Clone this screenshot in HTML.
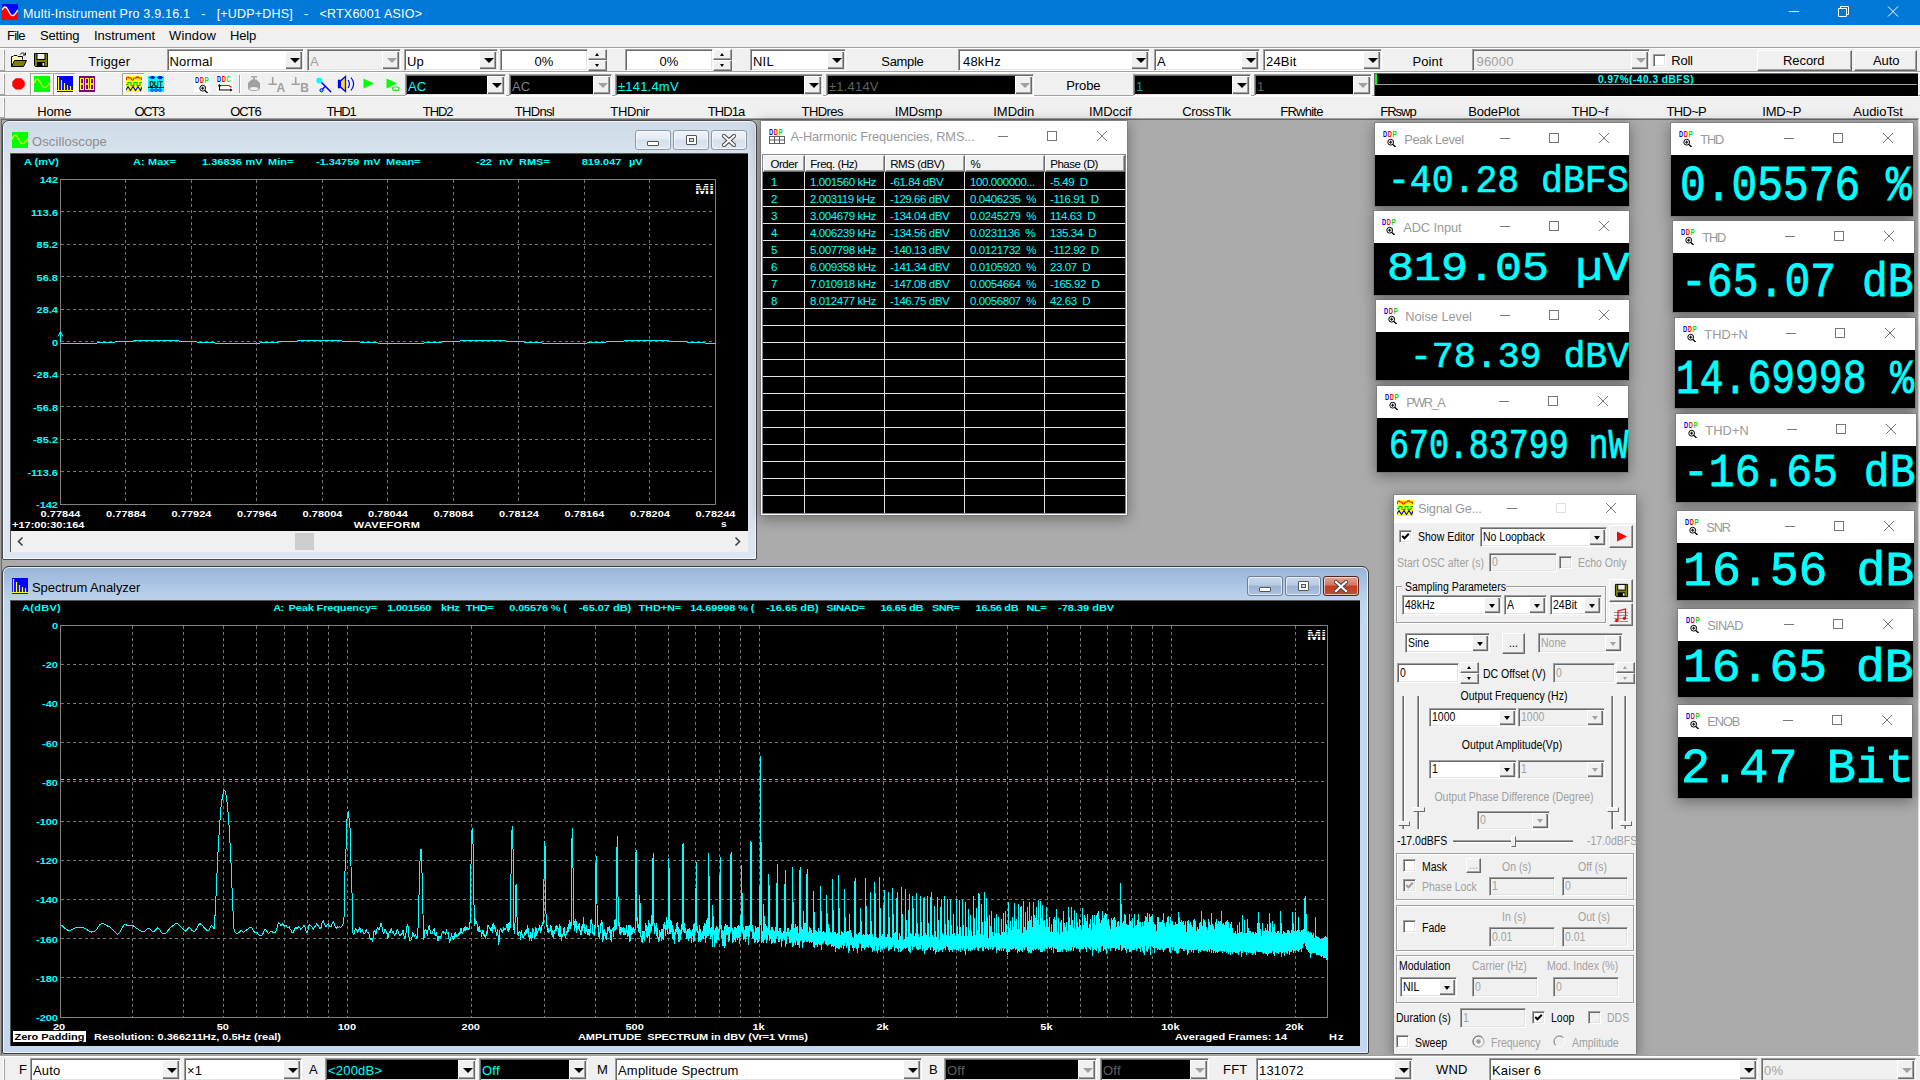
<!DOCTYPE html>
<html><head><meta charset="utf-8"><title>Multi-Instrument Pro</title><style>
html,body{margin:0;padding:0;}
body{width:1920px;height:1080px;overflow:hidden;background:#ababab;position:relative;font-family:"Liberation Sans",sans-serif;font-size:13px;color:#000;}
div{position:absolute;box-sizing:content-box;}
.t{white-space:pre;line-height:1;}
.ui{font-family:"Liberation Sans",sans-serif;font-size:13px;letter-spacing:0.2px;}
.ms{font-family:"Liberation Sans",sans-serif;font-size:11px;letter-spacing:-0.32px;}
.mss{font-size:12px;letter-spacing:0;transform:scaleX(0.875);transform-origin:0 0;margin-top:-0.45px;}
.sunk>div.mss{margin-top:0.45px;}
.dis{color:#a0a0a0;}
.ab{font-family:"Liberation Sans",sans-serif;font-weight:bold;font-size:11px;transform:scaleY(0.885);transform-origin:0 9.3px;}
.cy{color:#00ffff;}
.wh{color:#fff;}
.sunk{border:1px solid;border-color:#a0a0a0 #fff #fff #a0a0a0;box-shadow:inset 1px 1px 0 #696969, inset -1px -1px 0 #e3e3e3;padding:1px;overflow:hidden;}
.sunk>div,.sunk>svg{margin:1px;}
.cbtn{background:#f0f0f0;border:0;box-shadow:inset 1px 1px 0 #fff, inset -1px -1px 0 #696969, inset -2px -2px 0 #a0a0a0, inset 2px 2px 0 #f0f0f0;}
.rbtn{background:#f0f0f0;border:1px solid;border-color:#fff #696969 #696969 #fff;box-shadow:inset -1px -1px 0 #a0a0a0;}
.arr{width:0;height:0;}
.grp{border:1px solid #a0a0a0;box-shadow:1px 1px 0 #fff, inset 1px 1px 0 #fff;}
.mono{font-family:"Liberation Mono",monospace;font-weight:normal;color:#00ffff;white-space:pre;line-height:1;transform-origin:0 0;}
.w10{background:#fff;box-shadow:0 0 0 1px rgba(110,110,110,0.5), 0 3px 13px 1px rgba(0,0,0,0.36);}
.w10t{font-family:"Liberation Sans",sans-serif;font-size:13px;color:#999;white-space:pre;line-height:1;}
</style></head><body>
<div class="" style="left:0px;top:0px;width:1920px;height:25px;background:#0078d7"></div>
<svg style="position:absolute;left:2px;top:4px" width="16" height="16" viewBox="0 0 16 16"><rect width="16" height="16" fill="#0000ff"/><path d="M0 16 V6 C2 2 4 2 6 6 S10 14 13 10 L16 6 V16 Z" fill="#ff0000"/><path d="M0 6 C2 2 4 2 6 6 S10 14 13 10 L16 6" fill="none" stroke="#fff" stroke-width="1.3"/></svg>
<div class="t " style="left:23px;top:7.5px;font-size:12.5px;letter-spacing:0.207px;color:#fff">Multi-Instrument Pro 3.9.16.1   -   [+UDP+DHS]   -   &lt;RTX6001 ASIO&gt;</div>
<svg style="position:absolute;left:1780px;top:0" width="140" height="25" viewBox="0 0 140 25"><g stroke="#fff" stroke-width="1" fill="none"><path d="M9 11.5 H19"/><path d="M58.5 8.5 h8 v8 h-8 z M60.5 8.5 v-2 h8 v8 h-2"/><path d="M108 6.5 l10 10 M118 6.5 l-10 10"/></g></svg>
<div class="" style="left:0px;top:25px;width:1920px;height:22px;background:#f0f0f0"></div>
<div class="t " style="left:7px;top:29px;font-size:13px;letter-spacing:-0.815px;">File</div>
<div class="t " style="left:40px;top:29px;font-size:13px;letter-spacing:-0.162px;">Setting</div>
<div class="t " style="left:94px;top:29px;font-size:13px;letter-spacing:-0.046px;">Instrument</div>
<div class="t " style="left:169px;top:29px;font-size:13px;letter-spacing:0.153px;">Window</div>
<div class="t " style="left:230px;top:29px;font-size:13px;letter-spacing:-0.178px;">Help</div>
<div class="" style="left:0px;top:47px;width:1920px;height:72px;background:#f0f0f0"></div>
<div class="" style="left:0px;top:47px;width:1920px;height:1px;background:#a0a0a0"></div>
<div class="" style="left:0px;top:48px;width:1920px;height:1px;background:#fff"></div>
<div class="" style="left:0px;top:71px;width:1920px;height:1px;background:#a0a0a0"></div>
<div class="" style="left:0px;top:72px;width:1920px;height:1px;background:#fff"></div>
<div class="" style="left:0px;top:95px;width:1920px;height:1px;background:#a0a0a0"></div>
<div class="" style="left:0px;top:96px;width:1920px;height:1px;background:#fff"></div>
<div class="" style="left:3px;top:50px;width:1px;height:20px;background:#fff"></div>
<div class="" style="left:4px;top:50px;width:1px;height:20px;background:#a0a0a0"></div>
<div class="" style="left:0px;top:70px;width:5px;height:1px;background:#a0a0a0"></div>
<div class="" style="left:3px;top:74px;width:1px;height:20px;background:#fff"></div>
<div class="" style="left:4px;top:74px;width:1px;height:20px;background:#a0a0a0"></div>
<div class="" style="left:0px;top:94px;width:5px;height:1px;background:#a0a0a0"></div>
<div class="" style="left:3px;top:98px;width:1px;height:19px;background:#fff"></div>
<div class="" style="left:4px;top:98px;width:1px;height:19px;background:#a0a0a0"></div>
<div class="" style="left:0px;top:117px;width:5px;height:1px;background:#a0a0a0"></div>
<svg style="position:absolute;left:11px;top:52px" width="17" height="16" viewBox="0 0 17 16"><path d="M0.5 14.5 V4.5 H2 L3 3.5 H6 L7 4.5 H11.5 V7.5" fill="#ffff9c" stroke="#000" stroke-width="1"/><path d="M0.5 14.5 L3.5 8.5 H15.5 L12.5 14.5 Z" fill="#808000" stroke="#000" stroke-width="1"/><path d="M9 2.5 C10.5 0.5 13 0.5 14 2.5 M14.5 0.5 V3 H12" fill="none" stroke="#000" stroke-width="1"/></svg>
<svg style="position:absolute;left:33px;top:52px" width="16" height="16" viewBox="0 0 16 16"><path d="M1.5 1.5 H14.5 V14.5 H2.5 L1.5 13.5 Z" fill="#808000" stroke="#000" stroke-width="1"/><rect x="4" y="1.5" width="8" height="6" fill="#f0f0f0" stroke="#000" stroke-width="1"/><rect x="4" y="10" width="8" height="4.5" fill="#000"/><rect x="9.5" y="11" width="1.8" height="2.6" fill="#f0f0f0"/></svg>
<div class="t " style="left:88.3px;top:55px;font-size:13px;letter-spacing:0.168px;">Trigger</div>
<div class="sunk" style="left:167px;top:49px;width:133px;height:18px;background:#fff;color:#000;"><div class="t ui" style="left:0.5px;top:4px;">Normal</div><div class="cbtn" style="left:116px;top:0px;width:17px;height:18px"></div><div class="arr" style="left:120.5px;top:7.0px;border-left:5.0px solid transparent;border-right:5.0px solid transparent;border-top:5px solid #000"></div></div>
<div class="sunk" style="left:307px;top:49px;width:90px;height:18px;background:#f0f0f0;color:#a0a0a0;"><div class="t ui" style="left:1px;top:4px;">A</div><div class="cbtn" style="left:73px;top:0px;width:17px;height:18px"></div><div class="arr" style="left:77.5px;top:7.0px;border-left:5.0px solid transparent;border-right:5.0px solid transparent;border-top:5px solid #a0a0a0"></div></div>
<div class="sunk" style="left:404px;top:49px;width:90px;height:18px;background:#fff;color:#000;"><div class="t ui" style="left:1px;top:4px;">Up</div><div class="cbtn" style="left:73px;top:0px;width:17px;height:18px"></div><div class="arr" style="left:77.5px;top:7.0px;border-left:5.0px solid transparent;border-right:5.0px solid transparent;border-top:5px solid #000"></div></div>
<div class="sunk" style="left:500px;top:49px;width:84px;height:18px;background:#fff;color:#000"><div class="t ui" style="left:0;width:84px;text-align:center;top:4px;">0%</div></div>
<div class="rbtn" style="left:588px;top:49px;width:17px;height:9px"><div class="arr" style="left:6.0px;top:3.0px;border-left:2.5px solid transparent;border-right:2.5px solid transparent;border-bottom:3px solid #000"></div></div><div class="rbtn" style="left:588px;top:60px;width:17px;height:9px"><div class="arr" style="left:6.0px;top:3.0px;border-left:2.5px solid transparent;border-right:2.5px solid transparent;border-top:3px solid #000"></div></div>
<div class="sunk" style="left:625px;top:49px;width:84px;height:18px;background:#fff;color:#000"><div class="t ui" style="left:0;width:84px;text-align:center;top:4px;">0%</div></div>
<div class="rbtn" style="left:713px;top:49px;width:17px;height:9px"><div class="arr" style="left:6.0px;top:3.0px;border-left:2.5px solid transparent;border-right:2.5px solid transparent;border-bottom:3px solid #000"></div></div><div class="rbtn" style="left:713px;top:60px;width:17px;height:9px"><div class="arr" style="left:6.0px;top:3.0px;border-left:2.5px solid transparent;border-right:2.5px solid transparent;border-top:3px solid #000"></div></div>
<div class="sunk" style="left:750px;top:49px;width:92px;height:18px;background:#fff;color:#000;"><div class="t ui" style="left:1px;top:4px;">NIL</div><div class="cbtn" style="left:75px;top:0px;width:17px;height:18px"></div><div class="arr" style="left:79.5px;top:7.0px;border-left:5.0px solid transparent;border-right:5.0px solid transparent;border-top:5px solid #000"></div></div>
<div class="t " style="left:881.3px;top:55px;font-size:13px;letter-spacing:-0.335px;">Sample</div>
<div class="sunk" style="left:958px;top:49px;width:188px;height:18px;background:#fff;color:#000;"><div class="t ui" style="left:3px;top:4px;">48kHz</div><div class="cbtn" style="left:171px;top:0px;width:17px;height:18px"></div><div class="arr" style="left:175.5px;top:7.0px;border-left:5.0px solid transparent;border-right:5.0px solid transparent;border-top:5px solid #000"></div></div>
<div class="sunk" style="left:1154px;top:49px;width:102px;height:18px;background:#fff;color:#000;"><div class="t ui" style="left:1px;top:4px;">A</div><div class="cbtn" style="left:85px;top:0px;width:17px;height:18px"></div><div class="arr" style="left:89.5px;top:7.0px;border-left:5.0px solid transparent;border-right:5.0px solid transparent;border-top:5px solid #000"></div></div>
<div class="sunk" style="left:1263px;top:49px;width:115px;height:18px;background:#fff;color:#000;"><div class="t ui" style="left:1px;top:4px;">24Bit</div><div class="cbtn" style="left:98px;top:0px;width:17px;height:18px"></div><div class="arr" style="left:102.5px;top:7.0px;border-left:5.0px solid transparent;border-right:5.0px solid transparent;border-top:5px solid #000"></div></div>
<div class="t " style="left:1412.5px;top:55px;font-size:13px;letter-spacing:0.093px;">Point</div>
<div class="sunk" style="left:1472px;top:49px;width:174px;height:18px;background:#f0f0f0;color:#a0a0a0;"><div class="t ui" style="left:2.5px;top:4px;">96000</div><div class="cbtn" style="left:157px;top:0px;width:17px;height:18px"></div><div class="arr" style="left:161.5px;top:7.0px;border-left:5.0px solid transparent;border-right:5.0px solid transparent;border-top:5px solid #a0a0a0"></div></div>
<div class="sunk" style="left:1653px;top:54px;width:9px;height:9px;background:#fff"></div>
<div class="t " style="left:1671.3px;top:54px;font-size:13px;letter-spacing:-0.231px;">Roll</div>
<div class="rbtn" style="left:1757px;top:50px;width:93px;height:19px;"><div class="t " style="left:25px;top:3px;font-size:13px;letter-spacing:-0.081px;">Record</div></div>
<div class="rbtn" style="left:1854px;top:50px;width:61px;height:19px;"><div class="t " style="left:18px;top:3px;font-size:13px;letter-spacing:-0.081px;">Auto</div></div>
<svg style="position:absolute;left:11.5px;top:77.5px" width="13" height="12" viewBox="0 0 13 12"><path d="M3.7 0.3 H9.3 L12.7 3.6 V8.2 L9.3 11.5 H3.7 L0.3 8.2 V3.6 Z" fill="#ff0000"/></svg>
<div class="" style="left:30px;top:73px;width:22px;height:22px;background:#f6f6f6;box-shadow:inset 1px 1px 0 #a0a0a0, inset -1px -1px 0 #fff"></div>
<div class="" style="left:53px;top:73px;width:22px;height:22px;background:#f6f6f6;box-shadow:inset 1px 1px 0 #a0a0a0, inset -1px -1px 0 #fff"></div>
<div class="" style="left:122px;top:73px;width:22px;height:22px;background:#f6f6f6;box-shadow:inset 1px 1px 0 #a0a0a0, inset -1px -1px 0 #fff"></div>
<svg style="position:absolute;left:34px;top:76px" width="16" height="16" viewBox="0 0 16 16"><rect width="16" height="16" fill="#00ff00"/><path d="M0 7 C2 2 4 2 6 6 S10 14 13 10 L16 7" fill="none" stroke="#ffff00" stroke-width="1.1"/></svg>
<svg style="position:absolute;left:57px;top:76px" width="16" height="16" viewBox="0 0 16 16"><rect width="16" height="16" fill="#0000ff"/><path d="M1.5 1 V14 M4.5 4 V14 M7.5 7 V14 M10.5 9 V14 M13.5 10 V14" stroke="#ffff00" stroke-width="1.2"/><path d="M0 14.5 H16" stroke="#ffff00" stroke-width="1"/></svg>
<svg style="position:absolute;left:79px;top:76px" width="16" height="16" viewBox="0 0 16 16"><rect width="16" height="16" fill="#800080"/><g fill="none" stroke="#ffff00" stroke-width="1"><rect x="1.5" y="2.5" width="3" height="5.5"/><rect x="1.5" y="8" width="3" height="5.5"/><rect x="6.5" y="2.5" width="3" height="5.5"/><rect x="6.5" y="8" width="3" height="5.5"/><rect x="11.5" y="2.5" width="3" height="5.5"/><rect x="11.5" y="8" width="3" height="5.5"/></g><rect x="10" y="12.5" width="1" height="1.5" fill="#ffff00"/></svg>
<svg style="position:absolute;left:126px;top:76px" width="16" height="16" viewBox="0 0 16 16"><rect width="16" height="16" fill="#ffff00"/><path d="M0 4 C1 0.5 2 0.5 3 2 H5 C6 5 7 5 8 2 H10 C11 0.5 12 0.5 13 2 H15 L16 4" fill="none" stroke="#ff0000" stroke-width="1.1"/><path d="M0 8.5 H2 V6.5 H5 V9.5 H8 V6.5 H11 V9.5 H14 V6.5 H16" fill="none" stroke="#00c000" stroke-width="1.1"/><path d="M0 14 L2 10.5 L4.5 14.5 L7 10.5 L9.5 14.5 L12 10.5 L14.5 14.5 L16 11" fill="none" stroke="#0000ff" stroke-width="1.1"/></svg>
<svg style="position:absolute;left:148px;top:76px" width="16" height="16" viewBox="0 0 16 16"><rect width="16" height="16" fill="#00ffff"/><path d="M1 1.5 H7 M3 0.5 h3 v2 h-3z M9 1.5 h2 M12 1.5 h3 M11.5 0 l-2 1.5 l2 1.5z M12.5 0 l2 1.5 l-2 1.5z" stroke="#0000ff" stroke-width="0.9" fill="#0000ff"/><text x="8" y="10.5" font-family="Liberation Sans" font-weight="bold" font-size="8.5" text-anchor="middle" fill="#000" textLength="13" lengthAdjust="spacingAndGlyphs">DUT</text><path d="M0 11.5 H16" stroke="#0000ff" stroke-width="1"/><g fill="none" stroke="#0000ff" stroke-width="0.9"><circle cx="4" cy="14" r="1.3"/><circle cx="8" cy="14" r="1.3"/><circle cx="12" cy="14" r="1.3"/></g></svg>
<div class="" style="left:194px;top:76px;width:16px;height:16px;background:#fff"></div>
<svg style="position:absolute;left:195px;top:77px" width="16.0" height="16.0" viewBox="0 0 16 16"><g font-family="Liberation Sans" font-weight="bold" font-size="8.2"><text x="0" y="6" fill="#0000ff" textLength="4.2" lengthAdjust="spacingAndGlyphs">D</text><text x="4.8" y="6" fill="#ff0000" textLength="4.2" lengthAdjust="spacingAndGlyphs">D</text><text x="9.6" y="6" fill="#00e000" textLength="4.2" lengthAdjust="spacingAndGlyphs">P</text></g><circle cx="7.7" cy="11.2" r="2.9" fill="none" stroke="#000" stroke-width="1"/><path d="M9.8 13.4 L12.6 16" stroke="#000" stroke-width="1.3"/><path d="M7.7 9.6 V12.8 M6.1 11.2 H9.3" stroke="#000" stroke-width="1"/></svg>
<svg style="position:absolute;left:217px;top:76px" width="16" height="16" viewBox="0 0 16 16"><rect width="16" height="16" fill="#fff"/><g font-family="Liberation Sans" font-weight="bold" font-size="8.2"><text x="0" y="6" fill="#0000ff" textLength="4.2" lengthAdjust="spacingAndGlyphs">D</text><text x="4.8" y="6" fill="#ff0000" textLength="4.2" lengthAdjust="spacingAndGlyphs">D</text><text x="9.6" y="6" fill="#00e000" textLength="4.2" lengthAdjust="spacingAndGlyphs">C</text></g><path d="M2.5 9.5 V14 H14" fill="none" stroke="#000" stroke-width="1.1"/><path d="M2.5 9.5 H12 L14.5 11.5" fill="none" stroke="#ff0000" stroke-width="1.1"/><path d="M2.5 8 l-1.7 2.2 h3.4z M15.5 14 l-2.2 -1.7 v3.4z" fill="#000"/></svg>
<div class="" style="left:239px;top:75px;width:1px;height:18px;background:#a0a0a0"></div>
<div class="" style="left:240px;top:75px;width:1px;height:18px;background:#fff"></div>
<svg style="position:absolute;left:247px;top:76px" width="14" height="16" viewBox="0 0 14 16"><path d="M4 0.8 H10" stroke="#a0a0a0" stroke-width="1.3"/><path d="M7 0.8 V4" stroke="#a0a0a0" stroke-width="1.6"/><path d="M4.5 3.5 H9.5 L13 7 V12 C13 16 1 16 1 12 V7 Z" fill="#a0a0a0"/><ellipse cx="7" cy="12.6" rx="4.3" ry="1.5" fill="#f0f0f0"/></svg>
<svg style="position:absolute;left:268px;top:76px" width="18" height="16" viewBox="0 0 18 16"><path d="M4.7 1 V8.2 M0.5 8.2 H8.9" stroke="#a0a0a0" stroke-width="1.6" fill="none"/><text x="8.6" y="15.6" font-family="Liberation Sans" font-weight="bold" font-size="12" fill="#a0a0a0">A</text></svg>
<svg style="position:absolute;left:291px;top:76px" width="18" height="16" viewBox="0 0 18 16"><path d="M4.7 1 V8.2 M0.5 8.2 H8.9" stroke="#a0a0a0" stroke-width="1.6" fill="none"/><text x="9.2" y="15.6" font-family="Liberation Sans" font-weight="bold" font-size="12" fill="#a0a0a0">B</text></svg>
<svg style="position:absolute;left:315px;top:76px" width="17" height="17" viewBox="0 0 17 17"><path d="M5.5 5.5 L15.5 15.5" stroke="#0000ff" stroke-width="1.6"/><path d="M10.5 10 L7 14" stroke="#0000ff" stroke-width="1.3"/><circle cx="6.5" cy="14.3" r="1.6" fill="#00ffff" stroke="#0000ff" stroke-width="1"/><circle cx="4.3" cy="4.5" r="3" fill="#00ffff"/><rect x="15" y="15" width="1.3" height="1.3" fill="#000"/></svg>
<svg style="position:absolute;left:337px;top:75px" width="19" height="18" viewBox="0 0 19 18"><path d="M1.5 5.5 H4 L8.5 1.5 V16.5 L4 12.5 H1.5 Z" fill="#ffe000" stroke="#0000ff" stroke-width="1.3"/><path d="M1.5 5.5 H4 V12.5 H1.5Z" fill="#0000ff"/><path d="M11 5 C12.8 7.5 12.8 10.5 11 13 M14 2.5 C17.2 6.5 17.2 11.5 14 15.5" fill="none" stroke="#0000ff" stroke-width="1.2"/></svg>
<svg style="position:absolute;left:363px;top:78px" width="12" height="11" viewBox="0 0 12 11"><path d="M0.5 0.5 L11 5.5 L0.5 10.5 Z" fill="#00ff00"/></svg>
<svg style="position:absolute;left:386px;top:78px" width="14" height="14" viewBox="0 0 14 14"><path d="M0.5 0.5 L11 5.5 L0.5 10.5 Z" fill="#00ff00"/><rect x="6.5" y="9" width="6.5" height="3.4" rx="1.7" fill="none" stroke="#00ff00" stroke-width="1.2"/></svg>
<div class="sunk" style="left:405px;top:74px;width:97px;height:18px;background:#000;color:#00ffff;"><div class="t ui" style="left:1px;top:4px;">AC</div><div class="cbtn" style="left:80px;top:0px;width:17px;height:18px"></div><div class="arr" style="left:84.5px;top:7.0px;border-left:5.0px solid transparent;border-right:5.0px solid transparent;border-top:5px solid #000"></div></div>
<div class="sunk" style="left:509px;top:74px;width:99px;height:18px;background:#000;color:#808080;"><div class="t ui" style="left:1px;top:4px;">AC</div><div class="cbtn" style="left:82px;top:0px;width:17px;height:18px"></div><div class="arr" style="left:86.5px;top:7.0px;border-left:5.0px solid transparent;border-right:5.0px solid transparent;border-top:5px solid #a0a0a0"></div></div>
<div class="sunk" style="left:615px;top:74px;width:204px;height:18px;background:#000;color:#00ffff;"><div class="t ui" style="left:1px;top:4px;">±141.4mV</div><div class="cbtn" style="left:187px;top:0px;width:17px;height:18px"></div><div class="arr" style="left:191.5px;top:7.0px;border-left:5.0px solid transparent;border-right:5.0px solid transparent;border-top:5px solid #000"></div></div>
<div class="sunk" style="left:826px;top:74px;width:204px;height:18px;background:#000;color:#606060;"><div class="t ui" style="left:1px;top:4px;">±1.414V</div><div class="cbtn" style="left:187px;top:0px;width:17px;height:18px"></div><div class="arr" style="left:191.5px;top:7.0px;border-left:5.0px solid transparent;border-right:5.0px solid transparent;border-top:5px solid #a0a0a0"></div></div>
<div class="t " style="left:1066.3px;top:79px;font-size:13px;letter-spacing:-0.122px;">Probe</div>
<div class="sunk" style="left:1133px;top:74px;width:114px;height:18px;background:#000;color:#00a0a0;"><div class="t ui" style="left:1px;top:4px;">1</div><div class="cbtn" style="left:97px;top:0px;width:17px;height:18px"></div><div class="arr" style="left:101.5px;top:7.0px;border-left:5.0px solid transparent;border-right:5.0px solid transparent;border-top:5px solid #000"></div></div>
<div class="sunk" style="left:1254px;top:74px;width:114px;height:18px;background:#000;color:#606060;"><div class="t ui" style="left:1px;top:4px;">1</div><div class="cbtn" style="left:97px;top:0px;width:17px;height:18px"></div><div class="arr" style="left:101.5px;top:7.0px;border-left:5.0px solid transparent;border-right:5.0px solid transparent;border-top:5px solid #a0a0a0"></div></div>
<div class="" style="left:1374px;top:73px;width:544px;height:23px;background:#000;border-top:1px solid #696969;border-left:1px solid #696969;box-sizing:border-box;"></div>
<div class="" style="left:1375px;top:74px;width:2px;height:10px;background:#00ff00"></div>
<div class="" style="left:1375px;top:84px;width:542px;height:1px;background:#a0a0a0"></div>
<div class="t cy" style="left:1598px;top:75px;font-size:10px;letter-spacing:0.551px;font-weight:bold;font-family:"Liberation Sans",sans-serif">0.97%(-40.3 dBFS)</div>
<div class="t " style="left:37.3px;top:105px;font-size:13px;letter-spacing:-0.176px;">Home</div>
<div class="t " style="left:134.55px;top:105px;font-size:13px;letter-spacing:-1.340px;">OCT3</div>
<div class="t " style="left:230.3px;top:105px;font-size:13px;letter-spacing:-1.090px;">OCT6</div>
<div class="t " style="left:326.55px;top:105px;font-size:13px;letter-spacing:-1.265px;">THD1</div>
<div class="t " style="left:422.8px;top:105px;font-size:13px;letter-spacing:-1.098px;">THD2</div>
<div class="t " style="left:514.8px;top:105px;font-size:13px;letter-spacing:-0.687px;">THDnsl</div>
<div class="t " style="left:610.3px;top:105px;font-size:13px;letter-spacing:-0.352px;">THDnir</div>
<div class="t " style="left:707.8px;top:105px;font-size:13px;letter-spacing:-0.944px;">THD1a</div>
<div class="t " style="left:801.55px;top:105px;font-size:13px;letter-spacing:-0.575px;">THDres</div>
<div class="t " style="left:894.8px;top:105px;font-size:13px;letter-spacing:-0.198px;">IMDsmp</div>
<div class="t " style="left:993.3px;top:105px;font-size:13px;letter-spacing:-0.055px;">IMDdin</div>
<div class="t " style="left:1089.05px;top:105px;font-size:13px;letter-spacing:-0.113px;">IMDccif</div>
<div class="t " style="left:1182.3px;top:105px;font-size:13px;letter-spacing:-0.375px;">CrossTlk</div>
<div class="t " style="left:1280.3px;top:105px;font-size:13px;letter-spacing:-0.754px;">FRwhite</div>
<div class="t " style="left:1380.3px;top:105px;font-size:13px;letter-spacing:-1.011px;">FRswp</div>
<div class="t " style="left:1468.3px;top:105px;font-size:13px;letter-spacing:-0.194px;">BodePlot</div>
<div class="t " style="left:1571.55px;top:105px;font-size:13px;letter-spacing:-0.255px;">THD~f</div>
<div class="t " style="left:1666.55px;top:105px;font-size:13px;letter-spacing:-0.707px;">THD~P</div>
<div class="t " style="left:1762.3px;top:105px;font-size:13px;letter-spacing:-0.236px;">IMD~P</div>
<div class="t " style="left:1853.3px;top:105px;font-size:13px;letter-spacing:-0.030px;">AudioTst</div>
<div class="" style="left:0px;top:118px;width:1920px;height:1px;background:#a0a0a0"></div>
<div class="" style="left:0px;top:119px;width:1920px;height:1px;background:#696969"></div>
<div class="" style="left:0px;top:118px;width:1px;height:937px;background:#a0a0a0"></div>
<div class="" style="left:1px;top:119px;width:1px;height:936px;background:#696969"></div>
<div class="" style="left:1918px;top:119px;width:1px;height:936px;background:#e3e3e3"></div>
<div class="" style="left:1919px;top:118px;width:1px;height:937px;background:#fff"></div>
<div style="left:2px;top:120px;width:753px;height:438px;background:linear-gradient(180deg,#d0dbe8 0px,#d6e1ee 30px,#dce6f2 60px,#dce6f2 100%);border:1px solid #4a4a4a;border-radius:7px 7px 2px 2px;box-shadow:inset 0 0 0 1px rgba(255,255,255,0.75)"><svg style="position:absolute;left:9px;top:11px" width="16" height="16" viewBox="0 0 16 16"><rect width="16" height="16" fill="#00ff00"/><path d="M0 7 C2 2 4 2 6 6 S10 14 13 10 L16 7" fill="none" stroke="#ffff00" stroke-width="1.1"/></svg><div class="t" style="left:29px;top:13.5px;font-size:13px;letter-spacing:0.1px;color:#8c8c8c">Oscilloscope</div><div style="left:632px;top:9px;width:33.5px;height:18px;border:1px solid #8c99ab;border-radius:3px;background:linear-gradient(180deg,#eef3f9 0%,#e4ebf4 45%,#d6e0ec 50%,#dfe8f2 100%);box-shadow:inset 0 0 0 1px rgba(255,255,255,0.6)"><div style="left:11px;top:10px;width:10px;height:3px;background:#fff;border:1px solid #555;border-radius:1px"></div></div><div style="left:670px;top:9px;width:33.5px;height:18px;border:1px solid #8c99ab;border-radius:3px;background:linear-gradient(180deg,#eef3f9 0%,#e4ebf4 45%,#d6e0ec 50%,#dfe8f2 100%);box-shadow:inset 0 0 0 1px rgba(255,255,255,0.6)"><div style="left:11.5px;top:3.5px;width:9px;height:8px;border:1px solid #555;background:#fff;border-radius:1px"></div><div style="left:14.5px;top:6.5px;width:3px;height:2px;border:1px solid #555;background:#d0dcea"></div></div><div style="left:708px;top:9px;width:33.5px;height:18px;border:1px solid #8c99ab;border-radius:3px;background:linear-gradient(180deg,#eef3f9 0%,#e4ebf4 45%,#d6e0ec 50%,#dfe8f2 100%);box-shadow:inset 0 0 0 1px rgba(255,255,255,0.6)"><svg style="position:absolute;left:10px;top:2.5px" width="14" height="13" viewBox="0 0 14 13"><path d="M2 2 L12 11 M12 2 L2 11" stroke="#444" stroke-width="4.2" stroke-linecap="square"/><path d="M2 2 L12 11 M12 2 L2 11" stroke="#fff" stroke-width="2.2" stroke-linecap="square"/></svg></div></div>
<div class="" style="left:10px;top:153px;width:738px;height:399px;background:#000;border-top:1px solid #555;border-left:1px solid #555;box-sizing:border-box"></div>
<div class="" style="left:11px;top:531px;width:737px;height:21px;background:#f0f0f0"></div>
<div class="" style="left:295px;top:533px;width:19px;height:17px;background:#cdcdcd"></div>
<svg style="position:absolute;left:11px;top:531px" width="736" height="21" viewBox="0 0 736 21"><path d="M11.5 6.5 L7.5 10.5 L11.5 14.5 M724.5 6.5 L728.5 10.5 L724.5 14.5" fill="none" stroke="#404040" stroke-width="1.6"/></svg>
<svg style="position:absolute;left:0;top:0" width="760" height="560" viewBox="0 0 760 560" shape-rendering="crispEdges"><path d="M125.5 179.5 V504.5" stroke="#767676" stroke-width="1" stroke-dasharray="3 3" fill="none"/><path d="M191.5 179.5 V504.5" stroke="#767676" stroke-width="1" stroke-dasharray="3 3" fill="none"/><path d="M256.5 179.5 V504.5" stroke="#767676" stroke-width="1" stroke-dasharray="3 3" fill="none"/><path d="M322.5 179.5 V504.5" stroke="#767676" stroke-width="1" stroke-dasharray="3 3" fill="none"/><path d="M387.5 179.5 V504.5" stroke="#767676" stroke-width="1" stroke-dasharray="3 3" fill="none"/><path d="M453.5 179.5 V504.5" stroke="#767676" stroke-width="1" stroke-dasharray="3 3" fill="none"/><path d="M518.5 179.5 V504.5" stroke="#767676" stroke-width="1" stroke-dasharray="3 3" fill="none"/><path d="M584.5 179.5 V504.5" stroke="#767676" stroke-width="1" stroke-dasharray="3 3" fill="none"/><path d="M649.5 179.5 V504.5" stroke="#767676" stroke-width="1" stroke-dasharray="3 3" fill="none"/><path d="M60.5 211.5 H715.5" stroke="#767676" stroke-width="1" stroke-dasharray="3 3" fill="none"/><path d="M60.5 244.5 H715.5" stroke="#767676" stroke-width="1" stroke-dasharray="3 3" fill="none"/><path d="M60.5 276.5 H715.5" stroke="#767676" stroke-width="1" stroke-dasharray="3 3" fill="none"/><path d="M60.5 309.5 H715.5" stroke="#767676" stroke-width="1" stroke-dasharray="3 3" fill="none"/><path d="M60.5 341.5 H715.5" stroke="#767676" stroke-width="1" stroke-dasharray="3 3" fill="none"/><path d="M60.5 374.5 H715.5" stroke="#767676" stroke-width="1" stroke-dasharray="3 3" fill="none"/><path d="M60.5 406.5 H715.5" stroke="#767676" stroke-width="1" stroke-dasharray="3 3" fill="none"/><path d="M60.5 439.5 H715.5" stroke="#767676" stroke-width="1" stroke-dasharray="3 3" fill="none"/><path d="M60.5 471.5 H715.5" stroke="#767676" stroke-width="1" stroke-dasharray="3 3" fill="none"/><rect x="60.5" y="179.5" width="655.0" height="325.0" fill="none" stroke="#808080" stroke-width="1"/></svg>
<svg style="position:absolute;left:0;top:0" width="760" height="560" viewBox="0 0 760 560"><polyline points="60.5,343.5 61.5,343.5 62.5,343.5 63.5,343.5 64.5,343.5 65.5,343.5 66.5,343.5 67.5,343.5 68.5,343.5 69.5,343.5 70.5,343.5 71.5,343.5 72.5,343.5 73.5,343.5 74.5,343.5 75.5,343.5 76.5,343.5 77.5,343.5 78.5,343.5 79.5,343.5 80.5,343.5 81.5,343.5 82.5,343.5 83.5,343.5 84.5,343.5 85.5,343.5 86.5,343.5 87.5,343.5 88.5,343.5 89.5,343.5 90.5,343.5 91.5,343.5 92.5,343.5 93.5,343.5 94.5,343.5 95.5,343.5 96.5,343.5 97.5,342.5 98.5,342.5 99.5,342.5 100.5,342.5 101.5,342.5 102.5,342.5 103.5,342.5 104.5,342.5 105.5,342.5 106.5,342.5 107.5,342.5 108.5,342.5 109.5,342.5 110.5,342.5 111.5,342.5 112.5,342.5 113.5,342.5 114.5,342.5 115.5,341.5 116.5,341.5 117.5,341.5 118.5,341.5 119.5,341.5 120.5,341.5 121.5,341.5 122.5,341.5 123.5,341.5 124.5,341.5 125.5,341.5 126.5,341.5 127.5,341.5 128.5,341.5 129.5,341.5 130.5,341.5 131.5,341.5 132.5,341.5 133.5,340.5 134.5,340.5 135.5,340.5 136.5,340.5 137.5,340.5 138.5,340.5 139.5,340.5 140.5,340.5 141.5,340.5 142.5,340.5 143.5,340.5 144.5,340.5 145.5,340.5 146.5,340.5 147.5,340.5 148.5,340.5 149.5,340.5 150.5,340.5 151.5,340.5 152.5,340.5 153.5,340.5 154.5,340.5 155.5,340.5 156.5,340.5 157.5,340.5 158.5,340.5 159.5,340.5 160.5,340.5 161.5,340.5 162.5,340.5 163.5,340.5 164.5,340.5 165.5,340.5 166.5,340.5 167.5,340.5 168.5,340.5 169.5,340.5 170.5,340.5 171.5,340.5 172.5,340.5 173.5,340.5 174.5,340.5 175.5,340.5 176.5,340.5 177.5,340.5 178.5,340.5 179.5,341.5 180.5,341.5 181.5,341.5 182.5,341.5 183.5,341.5 184.5,341.5 185.5,341.5 186.5,341.5 187.5,341.5 188.5,341.5 189.5,341.5 190.5,341.5 191.5,341.5 192.5,341.5 193.5,341.5 194.5,341.5 195.5,341.5 196.5,341.5 197.5,342.5 198.5,342.5 199.5,342.5 200.5,342.5 201.5,342.5 202.5,342.5 203.5,342.5 204.5,342.5 205.5,342.5 206.5,342.5 207.5,342.5 208.5,342.5 209.5,342.5 210.5,342.5 211.5,342.5 212.5,342.5 213.5,342.5 214.5,342.5 215.5,343.5 216.5,343.5 217.5,343.5 218.5,343.5 219.5,343.5 220.5,343.5 221.5,343.5 222.5,343.5 223.5,343.5 224.5,343.5 225.5,343.5 226.5,343.5 227.5,343.5 228.5,343.5 229.5,343.5 230.5,343.5 231.5,343.5 232.5,343.5 233.5,343.5 234.5,343.5 235.5,343.5 236.5,343.5 237.5,343.5 238.5,343.5 239.5,343.5 240.5,343.5 241.5,343.5 242.5,343.5 243.5,343.5 244.5,343.5 245.5,343.5 246.5,343.5 247.5,343.5 248.5,343.5 249.5,343.5 250.5,343.5 251.5,343.5 252.5,343.5 253.5,343.5 254.5,343.5 255.5,343.5 256.5,343.5 257.5,343.5 258.5,343.5 259.5,343.5 260.5,342.5 261.5,342.5 262.5,342.5 263.5,342.5 264.5,342.5 265.5,342.5 266.5,342.5 267.5,342.5 268.5,342.5 269.5,342.5 270.5,342.5 271.5,342.5 272.5,342.5 273.5,342.5 274.5,342.5 275.5,342.5 276.5,342.5 277.5,342.5 278.5,342.5 279.5,341.5 280.5,341.5 281.5,341.5 282.5,341.5 283.5,341.5 284.5,341.5 285.5,341.5 286.5,341.5 287.5,341.5 288.5,341.5 289.5,341.5 290.5,341.5 291.5,341.5 292.5,341.5 293.5,341.5 294.5,341.5 295.5,341.5 296.5,341.5 297.5,340.5 298.5,340.5 299.5,340.5 300.5,340.5 301.5,340.5 302.5,340.5 303.5,340.5 304.5,340.5 305.5,340.5 306.5,340.5 307.5,340.5 308.5,340.5 309.5,340.5 310.5,340.5 311.5,340.5 312.5,340.5 313.5,340.5 314.5,340.5 315.5,340.5 316.5,340.5 317.5,340.5 318.5,340.5 319.5,340.5 320.5,340.5 321.5,340.5 322.5,340.5 323.5,340.5 324.5,340.5 325.5,340.5 326.5,340.5 327.5,340.5 328.5,340.5 329.5,340.5 330.5,340.5 331.5,340.5 332.5,340.5 333.5,340.5 334.5,340.5 335.5,340.5 336.5,340.5 337.5,340.5 338.5,340.5 339.5,340.5 340.5,340.5 341.5,340.5 342.5,341.5 343.5,341.5 344.5,341.5 345.5,341.5 346.5,341.5 347.5,341.5 348.5,341.5 349.5,341.5 350.5,341.5 351.5,341.5 352.5,341.5 353.5,341.5 354.5,341.5 355.5,341.5 356.5,341.5 357.5,341.5 358.5,341.5 359.5,341.5 360.5,342.5 361.5,342.5 362.5,342.5 363.5,342.5 364.5,342.5 365.5,342.5 366.5,342.5 367.5,342.5 368.5,342.5 369.5,342.5 370.5,342.5 371.5,342.5 372.5,342.5 373.5,342.5 374.5,342.5 375.5,342.5 376.5,342.5 377.5,342.5 378.5,343.5 379.5,343.5 380.5,343.5 381.5,343.5 382.5,343.5 383.5,343.5 384.5,343.5 385.5,343.5 386.5,343.5 387.5,343.5 388.5,343.5 389.5,343.5 390.5,343.5 391.5,343.5 392.5,343.5 393.5,343.5 394.5,343.5 395.5,343.5 396.5,343.5 397.5,343.5 398.5,343.5 399.5,343.5 400.5,343.5 401.5,343.5 402.5,343.5 403.5,343.5 404.5,343.5 405.5,343.5 406.5,343.5 407.5,343.5 408.5,343.5 409.5,343.5 410.5,343.5 411.5,343.5 412.5,343.5 413.5,343.5 414.5,343.5 415.5,343.5 416.5,343.5 417.5,343.5 418.5,343.5 419.5,343.5 420.5,343.5 421.5,343.5 422.5,343.5 423.5,343.5 424.5,342.5 425.5,342.5 426.5,342.5 427.5,342.5 428.5,342.5 429.5,342.5 430.5,342.5 431.5,342.5 432.5,342.5 433.5,342.5 434.5,342.5 435.5,342.5 436.5,342.5 437.5,342.5 438.5,342.5 439.5,342.5 440.5,342.5 441.5,342.5 442.5,341.5 443.5,341.5 444.5,341.5 445.5,341.5 446.5,341.5 447.5,341.5 448.5,341.5 449.5,341.5 450.5,341.5 451.5,341.5 452.5,341.5 453.5,341.5 454.5,341.5 455.5,341.5 456.5,341.5 457.5,341.5 458.5,341.5 459.5,341.5 460.5,340.5 461.5,340.5 462.5,340.5 463.5,340.5 464.5,340.5 465.5,340.5 466.5,340.5 467.5,340.5 468.5,340.5 469.5,340.5 470.5,340.5 471.5,340.5 472.5,340.5 473.5,340.5 474.5,340.5 475.5,340.5 476.5,340.5 477.5,340.5 478.5,340.5 479.5,340.5 480.5,340.5 481.5,340.5 482.5,340.5 483.5,340.5 484.5,340.5 485.5,340.5 486.5,340.5 487.5,340.5 488.5,340.5 489.5,340.5 490.5,340.5 491.5,340.5 492.5,340.5 493.5,340.5 494.5,340.5 495.5,340.5 496.5,340.5 497.5,340.5 498.5,340.5 499.5,340.5 500.5,340.5 501.5,340.5 502.5,340.5 503.5,340.5 504.5,340.5 505.5,340.5 506.5,341.5 507.5,341.5 508.5,341.5 509.5,341.5 510.5,341.5 511.5,341.5 512.5,341.5 513.5,341.5 514.5,341.5 515.5,341.5 516.5,341.5 517.5,341.5 518.5,341.5 519.5,341.5 520.5,341.5 521.5,341.5 522.5,341.5 523.5,341.5 524.5,342.5 525.5,342.5 526.5,342.5 527.5,342.5 528.5,342.5 529.5,342.5 530.5,342.5 531.5,342.5 532.5,342.5 533.5,342.5 534.5,342.5 535.5,342.5 536.5,342.5 537.5,342.5 538.5,342.5 539.5,342.5 540.5,342.5 541.5,342.5 542.5,343.5 543.5,343.5 544.5,343.5 545.5,343.5 546.5,343.5 547.5,343.5 548.5,343.5 549.5,343.5 550.5,343.5 551.5,343.5 552.5,343.5 553.5,343.5 554.5,343.5 555.5,343.5 556.5,343.5 557.5,343.5 558.5,343.5 559.5,343.5 560.5,343.5 561.5,343.5 562.5,343.5 563.5,343.5 564.5,343.5 565.5,343.5 566.5,343.5 567.5,343.5 568.5,343.5 569.5,343.5 570.5,343.5 571.5,343.5 572.5,343.5 573.5,343.5 574.5,343.5 575.5,343.5 576.5,343.5 577.5,343.5 578.5,343.5 579.5,343.5 580.5,343.5 581.5,343.5 582.5,343.5 583.5,343.5 584.5,343.5 585.5,343.5 586.5,343.5 587.5,342.5 588.5,342.5 589.5,342.5 590.5,342.5 591.5,342.5 592.5,342.5 593.5,342.5 594.5,342.5 595.5,342.5 596.5,342.5 597.5,342.5 598.5,342.5 599.5,342.5 600.5,342.5 601.5,342.5 602.5,342.5 603.5,342.5 604.5,342.5 605.5,342.5 606.5,341.5 607.5,341.5 608.5,341.5 609.5,341.5 610.5,341.5 611.5,341.5 612.5,341.5 613.5,341.5 614.5,341.5 615.5,341.5 616.5,341.5 617.5,341.5 618.5,341.5 619.5,341.5 620.5,341.5 621.5,341.5 622.5,341.5 623.5,341.5 624.5,340.5 625.5,340.5 626.5,340.5 627.5,340.5 628.5,340.5 629.5,340.5 630.5,340.5 631.5,340.5 632.5,340.5 633.5,340.5 634.5,340.5 635.5,340.5 636.5,340.5 637.5,340.5 638.5,340.5 639.5,340.5 640.5,340.5 641.5,340.5 642.5,340.5 643.5,340.5 644.5,340.5 645.5,340.5 646.5,340.5 647.5,340.5 648.5,340.5 649.5,340.5 650.5,340.5 651.5,340.5 652.5,340.5 653.5,340.5 654.5,340.5 655.5,340.5 656.5,340.5 657.5,340.5 658.5,340.5 659.5,340.5 660.5,340.5 661.5,340.5 662.5,340.5 663.5,340.5 664.5,340.5 665.5,340.5 666.5,340.5 667.5,340.5 668.5,340.5 669.5,341.5 670.5,341.5 671.5,341.5 672.5,341.5 673.5,341.5 674.5,341.5 675.5,341.5 676.5,341.5 677.5,341.5 678.5,341.5 679.5,341.5 680.5,341.5 681.5,341.5 682.5,341.5 683.5,341.5 684.5,341.5 685.5,341.5 686.5,341.5 687.5,342.5 688.5,342.5 689.5,342.5 690.5,342.5 691.5,342.5 692.5,342.5 693.5,342.5 694.5,342.5 695.5,342.5 696.5,342.5 697.5,342.5 698.5,342.5 699.5,342.5 700.5,342.5 701.5,342.5 702.5,342.5 703.5,342.5 704.5,342.5 705.5,343.5 706.5,343.5 707.5,343.5 708.5,343.5 709.5,343.5 710.5,343.5 711.5,343.5 712.5,343.5 713.5,343.5 714.5,343.5 715.5,343.5" fill="none" stroke="#00ffff" stroke-width="1" shape-rendering="crispEdges"/><path d="M60.5 342 V332 M58 336.5 L60.5 331.5 L63 336.5" fill="none" stroke="#00ffff" stroke-width="1"/><text x="695" y="194" font-family="Liberation Sans" font-weight="bold" font-size="15" fill="#fff" textLength="19" lengthAdjust="spacingAndGlyphs">MI</text><path d="M694 185.5 h21 M694 188 h21 M694 190.5 h21" stroke="#000" stroke-width="0.9"/></svg>
<div class="t ab cy" style="left:24px;top:156px;">A (mV)</div>
<div class="t ab cy" style="left:133px;top:156px;">A:</div>
<div class="t ab cy" style="left:148px;top:156px;">Max=</div>
<div class="t ab cy" style="left:202px;top:156px;">1.36836</div>
<div class="t ab cy" style="left:245.4px;top:156px;">mV</div>
<div class="t ab cy" style="left:268px;top:156px;">Min=</div>
<div class="t ab cy" style="left:316px;top:156px;">-1.34759</div>
<div class="t ab cy" style="left:363.5px;top:156px;">mV</div>
<div class="t ab cy" style="left:386px;top:156px;">Mean=</div>
<div class="t ab cy" style="left:476px;top:156px;">-22</div>
<div class="t ab cy" style="left:499px;top:156px;">nV</div>
<div class="t ab cy" style="left:519px;top:156px;">RMS=</div>
<div class="t ab cy" style="left:581.7px;top:156px;">819.047</div>
<div class="t ab cy" style="left:629px;top:156px;">µV</div>
<div class="t ab cy" style="left:0px;top:174.0px;width:58px;text-align:right;">142</div>
<div class="t ab cy" style="left:0px;top:206.5px;width:58px;text-align:right;">113.6</div>
<div class="t ab cy" style="left:0px;top:239.0px;width:58px;text-align:right;">85.2</div>
<div class="t ab cy" style="left:0px;top:271.5px;width:58px;text-align:right;">56.8</div>
<div class="t ab cy" style="left:0px;top:304.0px;width:58px;text-align:right;">28.4</div>
<div class="t ab cy" style="left:0px;top:336.5px;width:58px;text-align:right;">0</div>
<div class="t ab cy" style="left:0px;top:369.0px;width:58px;text-align:right;">-28.4</div>
<div class="t ab cy" style="left:0px;top:401.5px;width:58px;text-align:right;">-56.8</div>
<div class="t ab cy" style="left:0px;top:434.0px;width:58px;text-align:right;">-85.2</div>
<div class="t ab cy" style="left:0px;top:466.5px;width:58px;text-align:right;">-113.6</div>
<div class="t ab cy" style="left:0px;top:499.0px;width:58px;text-align:right;">-142</div>
<div class="t ab wh" style="left:30.5px;top:508px;width:60px;text-align:center;">0.77844</div>
<div class="t ab wh" style="left:96.0px;top:508px;width:60px;text-align:center;">0.77884</div>
<div class="t ab wh" style="left:161.5px;top:508px;width:60px;text-align:center;">0.77924</div>
<div class="t ab wh" style="left:227.0px;top:508px;width:60px;text-align:center;">0.77964</div>
<div class="t ab wh" style="left:292.5px;top:508px;width:60px;text-align:center;">0.78004</div>
<div class="t ab wh" style="left:358.0px;top:508px;width:60px;text-align:center;">0.78044</div>
<div class="t ab wh" style="left:423.5px;top:508px;width:60px;text-align:center;">0.78084</div>
<div class="t ab wh" style="left:489.0px;top:508px;width:60px;text-align:center;">0.78124</div>
<div class="t ab wh" style="left:554.5px;top:508px;width:60px;text-align:center;">0.78164</div>
<div class="t ab wh" style="left:620.0px;top:508px;width:60px;text-align:center;">0.78204</div>
<div class="t ab wh" style="left:685.5px;top:508px;width:60px;text-align:center;">0.78244</div>
<div class="t ab wh" style="left:12px;top:519px;">+17:00:30:164</div>
<div class="t ab wh" style="left:337px;top:519px;width:100px;text-align:center;letter-spacing:0.3px">WAVEFORM</div>
<div class="t ab wh" style="left:721px;top:519px;font-size:10px">s</div>
<div class="w10" style="left:761px;top:121px;width:366px;height:394px;"></div>
<svg style="position:absolute;left:769px;top:129px" width="17" height="16" viewBox="0 0 17 16"><g font-family="Liberation Sans" font-weight="bold" font-size="8.2"><text x="0" y="6" fill="#0000ff" textLength="4.2" lengthAdjust="spacingAndGlyphs">D</text><text x="4.8" y="6" fill="#ff0000" textLength="4.2" lengthAdjust="spacingAndGlyphs">D</text><text x="9.6" y="6" fill="#00e000" textLength="4.2" lengthAdjust="spacingAndGlyphs">P</text></g><g fill="none" stroke="#606060" stroke-width="1"><rect x="0.5" y="7.5" width="15" height="7"/><path d="M0.5 11 H15.5 M5.5 7.5 V14.5 M10.5 7.5 V14.5"/></g></svg>
<div class="t w10t" style="left:790.4px;top:131px;font-size:12.8px;letter-spacing:-0.117px;">A-Harmonic Frequencies, RMS...</div>
<svg style="position:absolute;left:990px;top:125px" width="130" height="24" viewBox="0 0 130 24"><g stroke="#777" stroke-width="1" fill="none"><path d="M8 11.5 H18"/><rect x="57.5" y="6.5" width="9" height="9"/><path d="M107 6 l10 10 M117 6 l-10 10"/></g></svg>
<div class="" style="left:762px;top:154px;width:362px;height:358px;background:#000;border:1px solid #828790"></div>
<div class="" style="left:763px;top:155px;width:40px;height:15px;background:#f0f0f0;border:1px solid;border-color:#fff #696969 #696969 #fff;box-shadow:inset -1px -1px 0 #a0a0a0"></div>
<div class="t ms" style="left:770.4px;top:159px;font-size:11.5px;letter-spacing:-0.45px">Order</div>
<div class="" style="left:805px;top:155px;width:78px;height:15px;background:#f0f0f0;border:1px solid;border-color:#fff #696969 #696969 #fff;box-shadow:inset -1px -1px 0 #a0a0a0"></div>
<div class="t ms" style="left:810.2px;top:159px;font-size:11.5px;letter-spacing:-0.45px">Freq. (Hz)</div>
<div class="" style="left:885px;top:155px;width:78px;height:15px;background:#f0f0f0;border:1px solid;border-color:#fff #696969 #696969 #fff;box-shadow:inset -1px -1px 0 #a0a0a0"></div>
<div class="t ms" style="left:890.2px;top:159px;font-size:11.5px;letter-spacing:-0.45px">RMS (dBV)</div>
<div class="" style="left:965px;top:155px;width:78px;height:15px;background:#f0f0f0;border:1px solid;border-color:#fff #696969 #696969 #fff;box-shadow:inset -1px -1px 0 #a0a0a0"></div>
<div class="t ms" style="left:970.4px;top:159px;font-size:11.5px;letter-spacing:-0.45px">%</div>
<div class="" style="left:1045px;top:155px;width:78px;height:15px;background:#f0f0f0;border:1px solid;border-color:#fff #696969 #696969 #fff;box-shadow:inset -1px -1px 0 #a0a0a0"></div>
<div class="t ms" style="left:1050.2px;top:159px;font-size:11.5px;letter-spacing:-0.45px">Phase (D)</div>
<svg style="position:absolute;left:0;top:0" width="1130" height="520" viewBox="0 0 1130 520" shape-rendering="crispEdges"><path d="M763 189.5 H1125" stroke="#e4e4e4" stroke-width="1"/><path d="M763 206.5 H1125" stroke="#e4e4e4" stroke-width="1"/><path d="M763 223.5 H1125" stroke="#e4e4e4" stroke-width="1"/><path d="M763 240.5 H1125" stroke="#e4e4e4" stroke-width="1"/><path d="M763 257.5 H1125" stroke="#e4e4e4" stroke-width="1"/><path d="M763 274.5 H1125" stroke="#e4e4e4" stroke-width="1"/><path d="M763 291.5 H1125" stroke="#e4e4e4" stroke-width="1"/><path d="M763 308.5 H1125" stroke="#e4e4e4" stroke-width="1"/><path d="M763 325.5 H1125" stroke="#e4e4e4" stroke-width="1"/><path d="M763 342.5 H1125" stroke="#e4e4e4" stroke-width="1"/><path d="M763 359.5 H1125" stroke="#e4e4e4" stroke-width="1"/><path d="M763 376.5 H1125" stroke="#e4e4e4" stroke-width="1"/><path d="M763 393.5 H1125" stroke="#e4e4e4" stroke-width="1"/><path d="M763 410.5 H1125" stroke="#e4e4e4" stroke-width="1"/><path d="M763 427.5 H1125" stroke="#e4e4e4" stroke-width="1"/><path d="M763 444.5 H1125" stroke="#e4e4e4" stroke-width="1"/><path d="M763 461.5 H1125" stroke="#e4e4e4" stroke-width="1"/><path d="M763 478.5 H1125" stroke="#e4e4e4" stroke-width="1"/><path d="M763 495.5 H1125" stroke="#e4e4e4" stroke-width="1"/><path d="M804.5 172 V513" stroke="#e4e4e4" stroke-width="1"/><path d="M884.5 172 V513" stroke="#e4e4e4" stroke-width="1"/><path d="M964.5 172 V513" stroke="#e4e4e4" stroke-width="1"/><path d="M1044.5 172 V513" stroke="#e4e4e4" stroke-width="1"/></svg>
<div class="t ms cy" style="left:771px;top:176.5px;font-size:11.5px;letter-spacing:-0.42px">1</div>
<div class="t ms cy" style="left:810px;top:176.5px;font-size:11.5px;letter-spacing:-0.42px">1.001560 kHz</div>
<div class="t ms cy" style="left:890px;top:176.5px;font-size:11.5px;letter-spacing:-0.42px">-61.84 dBV</div>
<div class="t ms cy" style="left:970px;top:176.5px;font-size:11.5px;letter-spacing:-0.42px">100.000000...</div>
<div class="t ms cy" style="left:1050px;top:176.5px;font-size:11.5px;letter-spacing:-0.42px">-5.49  D</div>
<div class="t ms cy" style="left:771px;top:193.5px;font-size:11.5px;letter-spacing:-0.42px">2</div>
<div class="t ms cy" style="left:810px;top:193.5px;font-size:11.5px;letter-spacing:-0.42px">2.003119 kHz</div>
<div class="t ms cy" style="left:890px;top:193.5px;font-size:11.5px;letter-spacing:-0.42px">-129.66 dBV</div>
<div class="t ms cy" style="left:970px;top:193.5px;font-size:11.5px;letter-spacing:-0.42px">0.0406235  %</div>
<div class="t ms cy" style="left:1050px;top:193.5px;font-size:11.5px;letter-spacing:-0.42px">-116.91  D</div>
<div class="t ms cy" style="left:771px;top:210.5px;font-size:11.5px;letter-spacing:-0.42px">3</div>
<div class="t ms cy" style="left:810px;top:210.5px;font-size:11.5px;letter-spacing:-0.42px">3.004679 kHz</div>
<div class="t ms cy" style="left:890px;top:210.5px;font-size:11.5px;letter-spacing:-0.42px">-134.04 dBV</div>
<div class="t ms cy" style="left:970px;top:210.5px;font-size:11.5px;letter-spacing:-0.42px">0.0245279  %</div>
<div class="t ms cy" style="left:1050px;top:210.5px;font-size:11.5px;letter-spacing:-0.42px">114.63  D</div>
<div class="t ms cy" style="left:771px;top:227.5px;font-size:11.5px;letter-spacing:-0.42px">4</div>
<div class="t ms cy" style="left:810px;top:227.5px;font-size:11.5px;letter-spacing:-0.42px">4.006239 kHz</div>
<div class="t ms cy" style="left:890px;top:227.5px;font-size:11.5px;letter-spacing:-0.42px">-134.56 dBV</div>
<div class="t ms cy" style="left:970px;top:227.5px;font-size:11.5px;letter-spacing:-0.42px">0.0231136  %</div>
<div class="t ms cy" style="left:1050px;top:227.5px;font-size:11.5px;letter-spacing:-0.42px">135.34  D</div>
<div class="t ms cy" style="left:771px;top:244.5px;font-size:11.5px;letter-spacing:-0.42px">5</div>
<div class="t ms cy" style="left:810px;top:244.5px;font-size:11.5px;letter-spacing:-0.42px">5.007798 kHz</div>
<div class="t ms cy" style="left:890px;top:244.5px;font-size:11.5px;letter-spacing:-0.42px">-140.13 dBV</div>
<div class="t ms cy" style="left:970px;top:244.5px;font-size:11.5px;letter-spacing:-0.42px">0.0121732  %</div>
<div class="t ms cy" style="left:1050px;top:244.5px;font-size:11.5px;letter-spacing:-0.42px">-112.92  D</div>
<div class="t ms cy" style="left:771px;top:261.5px;font-size:11.5px;letter-spacing:-0.42px">6</div>
<div class="t ms cy" style="left:810px;top:261.5px;font-size:11.5px;letter-spacing:-0.42px">6.009358 kHz</div>
<div class="t ms cy" style="left:890px;top:261.5px;font-size:11.5px;letter-spacing:-0.42px">-141.34 dBV</div>
<div class="t ms cy" style="left:970px;top:261.5px;font-size:11.5px;letter-spacing:-0.42px">0.0105920  %</div>
<div class="t ms cy" style="left:1050px;top:261.5px;font-size:11.5px;letter-spacing:-0.42px">23.07  D</div>
<div class="t ms cy" style="left:771px;top:278.5px;font-size:11.5px;letter-spacing:-0.42px">7</div>
<div class="t ms cy" style="left:810px;top:278.5px;font-size:11.5px;letter-spacing:-0.42px">7.010918 kHz</div>
<div class="t ms cy" style="left:890px;top:278.5px;font-size:11.5px;letter-spacing:-0.42px">-147.08 dBV</div>
<div class="t ms cy" style="left:970px;top:278.5px;font-size:11.5px;letter-spacing:-0.42px">0.0054664  %</div>
<div class="t ms cy" style="left:1050px;top:278.5px;font-size:11.5px;letter-spacing:-0.42px">-165.92  D</div>
<div class="t ms cy" style="left:771px;top:295.5px;font-size:11.5px;letter-spacing:-0.42px">8</div>
<div class="t ms cy" style="left:810px;top:295.5px;font-size:11.5px;letter-spacing:-0.42px">8.012477 kHz</div>
<div class="t ms cy" style="left:890px;top:295.5px;font-size:11.5px;letter-spacing:-0.42px">-146.75 dBV</div>
<div class="t ms cy" style="left:970px;top:295.5px;font-size:11.5px;letter-spacing:-0.42px">0.0056807  %</div>
<div class="t ms cy" style="left:1050px;top:295.5px;font-size:11.5px;letter-spacing:-0.42px">42.63  D</div>
<div style="left:2px;top:566px;width:1365px;height:486px;background:linear-gradient(180deg,#98b4d6 0px,#a8c3e2 15px,#bdd3ec 33px,#c3d8f0 60px,#c3d8f0 100%);border:1px solid #3b3b3b;border-radius:7px 7px 2px 2px;box-shadow:inset 0 0 0 1px rgba(255,255,255,0.75)"><svg style="position:absolute;left:9px;top:11px" width="16" height="16" viewBox="0 0 16 16"><rect width="16" height="16" fill="#0000ff"/><path d="M1.5 1 V14 M4.5 4 V14 M7.5 7 V14 M10.5 9 V14 M13.5 10 V14" stroke="#ffff00" stroke-width="1.2"/><path d="M0 14.5 H16" stroke="#ffff00" stroke-width="1"/></svg><div class="t" style="left:29px;top:13.5px;font-size:13px;letter-spacing:-0.05px;color:#000">Spectrum Analyzer</div><div style="left:1244px;top:9px;width:33.5px;height:18px;border:1px solid #6f7f95;border-radius:3px;background:linear-gradient(180deg,#c9d8ec 0%,#b8cbe4 45%,#9bb4d4 50%,#abc2de 100%);box-shadow:inset 0 0 0 1px rgba(255,255,255,0.6)"><div style="left:11px;top:10px;width:10px;height:3px;background:#fff;border:1px solid #555;border-radius:1px"></div></div><div style="left:1282px;top:9px;width:33.5px;height:18px;border:1px solid #6f7f95;border-radius:3px;background:linear-gradient(180deg,#c9d8ec 0%,#b8cbe4 45%,#9bb4d4 50%,#abc2de 100%);box-shadow:inset 0 0 0 1px rgba(255,255,255,0.6)"><div style="left:11.5px;top:3.5px;width:9px;height:8px;border:1px solid #555;background:#fff;border-radius:1px"></div><div style="left:14.5px;top:6.5px;width:3px;height:2px;border:1px solid #555;background:#d0dcea"></div></div><div style="left:1320px;top:9px;width:33.5px;height:18px;border:1px solid #5e2018;border-radius:3px;background:linear-gradient(180deg,#e3a797 0%,#d4745e 45%,#c13d23 50%,#c64c32 100%);box-shadow:inset 0 0 0 1px rgba(255,255,255,0.6)"><svg style="position:absolute;left:10px;top:2.5px" width="14" height="13" viewBox="0 0 14 13"><path d="M2 2 L12 11 M12 2 L2 11" stroke="#444" stroke-width="4.2" stroke-linecap="square"/><path d="M2 2 L12 11 M12 2 L2 11" stroke="#fff" stroke-width="2.2" stroke-linecap="square"/></svg></div></div>
<div class="" style="left:10px;top:600px;width:1350px;height:446px;background:#000;border-top:1px solid #555;border-left:1px solid #555;box-sizing:border-box"></div>
<svg style="position:absolute;left:0;top:0" width="1370" height="1060" viewBox="0 0 1370 1060" shape-rendering="crispEdges"><path d="M132.5 625.5 V1017.5" stroke="#767676" stroke-width="1" stroke-dasharray="3 3" fill="none"/><path d="M183.5 625.5 V1017.5" stroke="#767676" stroke-width="1" stroke-dasharray="3 3" fill="none"/><path d="M223.5 625.5 V1017.5" stroke="#767676" stroke-width="1" stroke-dasharray="3 3" fill="none"/><path d="M256.5 625.5 V1017.5" stroke="#767676" stroke-width="1" stroke-dasharray="3 3" fill="none"/><path d="M284.5 625.5 V1017.5" stroke="#767676" stroke-width="1" stroke-dasharray="3 3" fill="none"/><path d="M307.5 625.5 V1017.5" stroke="#767676" stroke-width="1" stroke-dasharray="3 3" fill="none"/><path d="M328.5 625.5 V1017.5" stroke="#767676" stroke-width="1" stroke-dasharray="3 3" fill="none"/><path d="M347.5 625.5 V1017.5" stroke="#767676" stroke-width="1" stroke-dasharray="3 3" fill="none"/><path d="M471.5 625.5 V1017.5" stroke="#767676" stroke-width="1" stroke-dasharray="3 3" fill="none"/><path d="M544.5 625.5 V1017.5" stroke="#767676" stroke-width="1" stroke-dasharray="3 3" fill="none"/><path d="M595.5 625.5 V1017.5" stroke="#767676" stroke-width="1" stroke-dasharray="3 3" fill="none"/><path d="M635.5 625.5 V1017.5" stroke="#767676" stroke-width="1" stroke-dasharray="3 3" fill="none"/><path d="M668.5 625.5 V1017.5" stroke="#767676" stroke-width="1" stroke-dasharray="3 3" fill="none"/><path d="M695.5 625.5 V1017.5" stroke="#767676" stroke-width="1" stroke-dasharray="3 3" fill="none"/><path d="M719.5 625.5 V1017.5" stroke="#767676" stroke-width="1" stroke-dasharray="3 3" fill="none"/><path d="M740.5 625.5 V1017.5" stroke="#767676" stroke-width="1" stroke-dasharray="3 3" fill="none"/><path d="M759.5 625.5 V1017.5" stroke="#767676" stroke-width="1" stroke-dasharray="3 3" fill="none"/><path d="M883.5 625.5 V1017.5" stroke="#767676" stroke-width="1" stroke-dasharray="3 3" fill="none"/><path d="M956.5 625.5 V1017.5" stroke="#767676" stroke-width="1" stroke-dasharray="3 3" fill="none"/><path d="M1007.5 625.5 V1017.5" stroke="#767676" stroke-width="1" stroke-dasharray="3 3" fill="none"/><path d="M1047.5 625.5 V1017.5" stroke="#767676" stroke-width="1" stroke-dasharray="3 3" fill="none"/><path d="M1080.5 625.5 V1017.5" stroke="#767676" stroke-width="1" stroke-dasharray="3 3" fill="none"/><path d="M1107.5 625.5 V1017.5" stroke="#767676" stroke-width="1" stroke-dasharray="3 3" fill="none"/><path d="M1131.5 625.5 V1017.5" stroke="#767676" stroke-width="1" stroke-dasharray="3 3" fill="none"/><path d="M1152.5 625.5 V1017.5" stroke="#767676" stroke-width="1" stroke-dasharray="3 3" fill="none"/><path d="M1171.5 625.5 V1017.5" stroke="#767676" stroke-width="1" stroke-dasharray="3 3" fill="none"/><path d="M1295.5 625.5 V1017.5" stroke="#767676" stroke-width="1" stroke-dasharray="3 3" fill="none"/><path d="M60.5 664.5 H1327.5" stroke="#767676" stroke-width="1" stroke-dasharray="3 3" fill="none"/><path d="M60.5 703.5 H1327.5" stroke="#767676" stroke-width="1" stroke-dasharray="3 3" fill="none"/><path d="M60.5 742.5 H1327.5" stroke="#767676" stroke-width="1" stroke-dasharray="3 3" fill="none"/><path d="M60.5 781.5 H1327.5" stroke="#767676" stroke-width="1" stroke-dasharray="3 3" fill="none"/><path d="M60.5 821.5 H1327.5" stroke="#767676" stroke-width="1" stroke-dasharray="3 3" fill="none"/><path d="M60.5 860.5 H1327.5" stroke="#767676" stroke-width="1" stroke-dasharray="3 3" fill="none"/><path d="M60.5 899.5 H1327.5" stroke="#767676" stroke-width="1" stroke-dasharray="3 3" fill="none"/><path d="M60.5 938.5 H1327.5" stroke="#767676" stroke-width="1" stroke-dasharray="3 3" fill="none"/><path d="M60.5 977.5 H1327.5" stroke="#767676" stroke-width="1" stroke-dasharray="3 3" fill="none"/><rect x="60.5" y="625.5" width="1267.0" height="392.0" fill="none" stroke="#808080" stroke-width="1"/><path d="M60.5 779.5 H1294" stroke="#00ffff" stroke-width="1" stroke-dasharray="3 3" fill="none"/></svg>
<svg style="position:absolute;left:0;top:0" width="1370" height="1060" viewBox="0 0 1370 1060"><path d="M61.8 925.2 L65.0 928.6 L68.1 930.4 L71.3 929.9 L74.3 928.2 L77.3 927.3 L80.3 927.3 L83.2 927.8 L86.0 929.1 L88.9 930.8 L91.6 932.1 L94.4 931.7 L97.1 928.7 L99.7 924.8 L102.3 923.3 L104.9 924.5 L107.4 925.9 L109.9 927.1 L112.4 929.1 L114.8 932.1 L117.2 934.3 L119.6 932.8 L121.9 928.2 L124.2 924.9 L126.5 925.0 L128.8 925.6 L131.0 925.2 L133.2 925.8 L135.4 927.4 L137.5 928.8 L139.6 930.3 L141.7 931.7 L143.8 931.9 L145.8 930.2 L147.8 928.4 L149.8 928.6 L151.8 930.9 L153.8 932.0 L155.7 929.9 L157.6 928.0 L159.5 929.4 L161.4 932.4 L163.2 933.9 L165.1 933.6 L166.9 932.1 L168.7 929.8 L170.5 927.5 L172.2 926.3 L174.0 925.0 L175.7 923.3 L177.4 923.5 L179.1 925.2 L180.8 926.7 L182.4 928.1 L184.1 930.4 L185.7 931.1 L187.3 929.1 L188.9 927.4 L190.5 928.5 L192.1 930.6 L193.7 931.7 L195.2 930.9 L196.8 928.4 L198.3 925.2 L199.8 923.7 L201.3 924.5 L202.8 926.0 L204.2 927.6 L205.7 929.4 L207.2 930.9 L208.6 930.7 L210.0 928.0 L211.4 925.6 L212.8 926.7 L214.2 928.8 L215.6 906.0 L217.0 873.5 L218.3 846.1 L219.7 824.1 L221.0 807.6 L222.4 796.5 L223.7 790.9 L225.0 790.7 L226.3 796.0 L227.6 806.7 L228.9 822.9 L230.1 844.4 L231.4 871.5 L232.6 903.5 L233.9 928.6 L235.1 932.7 L236.4 933.2 L237.6 933.0 L238.8 932.8 L240.0 931.5 L241.2 930.5 L242.4 931.3 L243.6 932.2 L244.7 931.5 L245.9 930.5 L247.1 929.7 L248.2 928.6 L249.4 927.8 L250.5 927.4 L251.6 927.7 L252.7 929.4 L253.9 931.4 L255.0 932.3 L256.1 932.2 L257.2 932.8 L258.2 934.5 L259.3 935.4 L260.4 935.3 L261.5 935.4 L262.5 934.6 L263.6 932.1 L264.6 929.9 L265.7 929.5 L266.7 931.0 L267.7 932.9 L268.8 933.3 L269.8 932.2 L270.8 931.3 L271.8 931.4 L272.8 932.1 L273.8 932.8 L274.8 932.9 L275.8 932.0 L276.8 928.9 L277.7 924.8 L278.7 922.5 L279.7 923.6 L280.6 925.7 L281.6 925.1 L282.5 923.8 L283.5 924.7 L284.4 926.2 L285.3 925.9 L286.3 925.9 L287.2 927.2 L288.1 927.2 L289.5 926.8 L289.5 927.9 L290.8 929.9 L291.7 932.0 L292.6 932.9 L293.5 931.8 L294.4 929.6 L295.3 927.9 L296.2 927.8 L297.5 928.5 L297.5 927.8 L298.8 926.7 L299.7 927.5 L300.5 929.0 L301.4 929.0 L302.2 928.0 L303.5 926.7 L303.5 925.3 L304.7 925.8 L305.6 929.4 L306.4 933.0 L307.2 932.6 L308.5 929.1 L308.5 926.0 L309.7 924.8 L310.5 925.3 L311.3 926.3 L312.5 927.4 L312.5 929.0 L313.7 929.0 L314.5 927.3 L315.3 925.9 L316.5 924.2 L316.5 923.1 L317.6 924.6 L318.4 926.5 L319.5 927.4 L319.5 928.7 L320.7 928.7 L321.5 925.7 L322.2 922.2 L323.5 920.7 L323.5 921.6 L324.5 923.9 L325.5 926.2 L325.5 926.9 L326.7 925.8 L327.5 924.2 L328.5 923.9 L328.5 924.8 L329.7 926.2 L330.4 926.8 L331.5 926.1 L331.5 924.7 L332.6 923.0 L333.5 921.5 L333.5 921.6 L334.7 924.3 L335.4 927.5 L336.5 928.7 L336.5 927.7 L337.5 927.0 L338.5 927.3 L338.5 927.1 L339.6 926.7 L340.5 927.2 L340.5 927.3 L341.6 926.4 L342.5 925.6 L342.5 924.7 L343.6 923.6 L344.5 910.3 L344.5 881.5 L345.7 856.7 L346.5 837.3 L346.5 823.3 L347.6 814.8 L348.5 811.7 L348.5 814.1 L349.6 821.9 L350.5 835.1 L350.5 853.8 L351.5 877.9 L352.5 907.2 L352.5 932.2 L353.5 934.3 L354.5 932.6 L354.5 931.0 L355.5 929.5 L355.5 928.7 L356.6 929.5 L357.5 931.8 L357.5 932.9 L358.5 931.0 L359.5 928.0 L359.5 927.2 L360.5 929.8 L360.5 932.2 L361.5 931.2 L362.5 929.7 L362.5 930.9 L363.5 933.0 L363.5 933.8 L364.6 933.3 L365.5 932.1 L365.5 930.6 L366.5 930.0 L366.5 931.3 L367.5 932.6 L368.5 932.3 L368.5 932.8 L369.5 935.5 L369.5 938.5 L370.4 939.1 L371.5 938.1 L371.5 939.2 L372.5 941.5 L372.5 940.4 L373.5 935.7 L373.5 931.7 L374.5 930.7 L375.5 932.3 L375.5 934.3 L376.5 933.6 L376.5 930.4 L377.5 928.0 L377.5 927.5 L378.5 928.5 L378.5 930.0 L379.5 929.0 L380.5 925.6 L380.5 923.5 L381.5 924.0 L381.5 926.0 L382.5 928.6 L382.5 931.1 L383.5 933.3 L383.5 933.8 L384.5 931.7 L384.5 929.7 L385.5 929.4 L385.5 929.8 L386.5 931.5 L387.5 935.4 L387.5 938.3 L388.5 937.8 L388.5 934.6 L389.5 931.6 L389.5 931.4 L390.5 932.2 L390.5 930.3 L391.5 928.5 L391.5 930.3 L392.5 932.4 L392.5 931.8 L393.5 931.1 L393.5 932.8 L394.5 935.2 L394.5 935.4 L395.5 934.2 L395.5 933.9 L396.5 933.0 L396.5 930.5 L397.5 929.3 L397.5 930.4 L398.5 931.8 L398.5 933.1 L399.5 934.7 L399.5 935.6 L400.5 935.3 L400.5 934.9 L401.5 934.9 L401.5 934.5 L402.5 932.8 L402.5 930.2 L403.5 930.2 L403.5 933.9 L404.5 937.6 L404.5 938.6 L405.5 937.6 L405.5 934.9 L406.5 931.2 L406.5 927.1 L407.5 926.1 L407.5 924.6 L408.5 927.0 L408.5 933.9 L409.5 939.3 L409.5 940.3 L410.5 940.5 L410.5 940.9 L411.5 939.7 L411.5 937.7 L412.5 935.7 L412.5 932.5 L413.5 933.7 L413.5 935.4 L414.5 936.6 L414.5 936.2 L415.5 934.7 L415.5 934.7 L416.5 937.0 L416.5 938.4 L417.5 937.4 L417.5 931.0 L418.5 925.3 L418.5 906.1 L419.5 884.2 L419.5 867.3 L420.5 855.9 L420.5 849.9 L421.5 849.4 L421.5 864.6 L422.5 880.4 L422.5 901.5 L423.5 926.8 L423.5 939.7 L424.5 935.7 L424.5 930.5 L425.5 930.0 L425.5 929.9 L426.5 931.0 L426.5 933.4 L427.5 935.3 L427.5 931.8 L428.5 929.0 L428.5 926.6 L429.5 925.2 L429.5 928.6 L430.5 931.4 L430.5 933.3 L431.5 933.6 L431.5 933.8 L432.5 933.6 L432.5 931.3 L433.5 930.7 L433.5 929.6 L434.5 928.3 L434.5 933.7 L435.5 935.8 L435.5 934.2 L436.5 932.3 L436.5 934.8 L437.5 937.6 L437.5 940.5 L438.5 940.7 L438.5 936.8 L439.5 937.0 L439.5 937.9 L440.5 938.3 L440.5 937.1 L441.5 936.4 L441.5 934.1 L442.5 932.2 L442.5 931.2 L443.5 931.3 L443.5 933.2 L444.5 932.7 L444.5 932.4 L445.5 933.3 L445.5 934.5 L446.5 929.7 L446.5 931.9 L447.5 933.7 L447.5 933.6 L448.5 932.6 L448.5 936.9 L449.5 941.1 L449.5 942.8 L450.5 939.5 L450.5 938.2 L451.5 935.9 L451.5 933.5 L452.5 938.7 L452.5 936.7 L453.5 936.5 L453.5 939.8 L454.5 937.9 L454.5 934.1 L455.5 932.5 L455.5 936.2 L456.5 936.4 L456.5 934.6 L457.5 935.3 L457.5 936.9 L458.5 935.7 L458.5 933.3 L459.5 932.5 L459.5 934.4 L460.5 932.8 L460.5 928.5 L461.5 928.8 L461.5 932.0 L462.5 933.7 L462.5 932.7 L463.5 931.7 L463.5 929.2 L464.5 927.4 L464.5 930.1 L465.5 930.7 L465.5 926.8 L466.5 928.3 L466.5 929.7 L467.5 927.7 L467.5 929.7 L468.5 929.5 L468.5 929.0 L469.5 927.8 L469.5 923.2 L470.5 921.8 L470.5 874.7 L471.5 854.9 L471.5 831.7 L472.5 828.2 L472.5 837.6 L473.5 850.5 L473.5 892.5 L474.5 917.3 L474.5 925.2 L475.5 922.3 L475.5 919.4 L476.5 922.4 L476.5 923.9 L477.5 924.4 L477.5 930.0 L478.5 931.3 L478.5 928.3 L479.5 926.9 L479.5 931.8 L480.5 931.7 L480.5 930.3 L481.5 934.2 L481.5 936.4 L482.5 931.7 L482.5 930.2 L483.5 930.6 L483.5 935.6 L484.5 936.7 L484.5 934.5 L485.5 935.7 L485.5 938.2 L486.5 933.8 L486.5 931.9 L487.5 933.9 L487.5 925.0 L488.5 925.3 L488.5 926.4 L489.5 927.8 L489.5 928.8 L490.5 928.1 L490.5 930.9 L491.5 927.6 L491.5 929.6 L492.5 932.1 L492.5 925.4 L493.5 923.9 L493.5 928.0 L494.5 928.5 L494.5 925.4 L495.5 928.8 L495.5 931.4 L496.5 932.8 L496.5 935.5 L497.5 929.4 L497.5 932.3 L498.5 937.1 L498.5 944.2 L499.5 939.1 L499.5 931.1 L500.5 928.9 L500.5 928.3 L501.5 929.4 L501.5 931.7 L502.5 932.7 L502.5 931.2 L503.5 929.8 L503.5 927.8 L504.5 928.7 L504.5 929.7 L505.5 928.4 L505.5 929.7 L506.5 926.9 L506.5 924.4 L507.5 925.0 L507.5 930.0 L508.5 931.8 L508.5 923.9 L509.5 922.9 L509.5 929.2 L510.5 927.4 L510.5 885.8 L511.5 863.2 L511.5 834.2 L512.5 826.9 L512.5 841.4 L513.5 856.8 L513.5 924.9 L514.5 933.9 L514.5 926.2 L515.5 920.9 L515.5 886.7 L516.5 884.2 L516.5 909.0 L517.5 924.2 L517.5 933.4 L518.5 935.4 L518.5 932.4 L519.5 932.9 L519.5 931.1 L520.5 932.6 L520.5 939.3 L521.5 930.4 L521.5 935.0 L522.5 934.8 L522.5 937.2 L523.5 937.7 L523.5 936.9 L524.5 935.7 L524.5 932.7 L525.5 934.1 L525.5 930.9 L526.5 929.7 L526.5 933.5 L527.5 932.7 L527.5 925.5 L528.5 930.8 L528.5 936.9 L529.5 935.4 L529.5 940.5 L530.5 934.6 L530.5 932.0 L531.5 934.0 L531.5 940.5 L532.5 934.7 L532.5 928.4 L533.5 929.5 L533.5 931.5 L534.5 933.2 L534.5 938.2 L535.5 935.0 L535.5 927.5 L536.5 928.6 L536.5 935.1 L537.5 933.6 L537.5 931.2 L538.5 930.9 L538.5 928.6 L539.5 929.7 L539.5 925.7 L540.5 928.5 L540.5 933.0 L541.5 929.4 L541.5 926.4 L542.5 924.5 L542.5 922.1 L543.5 923.5 L543.5 889.6 L544.5 869.5 L544.5 841.8 L545.5 850.5 L545.5 903.7 L546.5 923.4 L546.5 926.2 L547.5 926.0 L547.5 931.7 L548.5 928.8 L548.5 932.5 L549.5 931.6 L549.5 930.5 L550.5 930.1 L550.5 925.9 L551.5 926.8 L551.5 933.7 L552.5 936.0 L552.5 930.3 L553.5 932.1 L553.5 937.1 L554.5 932.0 L554.5 930.2 L555.5 930.1 L555.5 926.0 L556.5 930.4 L556.5 925.3 L557.5 926.3 L557.5 928.8 L558.5 928.7 L558.5 935.5 L559.5 936.8 L559.5 924.7 L560.5 926.8 L560.5 932.8 L561.5 940.3 L561.5 934.1 L562.5 934.4 L562.5 936.8 L563.5 932.2 L563.5 929.2 L564.5 927.2 L564.5 934.1 L565.5 937.8 L565.5 934.9 L566.5 934.0 L566.5 931.0 L567.5 932.0 L567.5 927.6 L568.5 931.5 L568.5 924.2 L569.5 929.0 L569.5 920.3 L570.5 923.7 L570.5 928.6 L571.5 924.4 L571.5 848.5 L572.5 828.4 L572.5 857.2 L573.5 877.7 L573.5 924.5 L574.5 921.2 L574.5 930.3 L575.5 925.6 L575.5 919.5 L576.5 923.3 L576.5 932.6 L577.5 927.0 L577.5 929.2 L578.5 924.9 L578.5 928.5 L579.5 924.0 L579.5 930.0 L580.5 930.3 L580.5 934.3 L581.5 934.9 L581.5 929.2 L582.5 924.1 L582.5 930.5 L583.5 925.4 L583.5 917.9 L584.5 932.1 L584.5 924.9 L585.5 929.3 L585.5 933.2 L586.5 930.3 L586.5 925.4 L587.5 932.9 L587.5 934.9 L588.5 934.5 L588.5 929.9 L589.5 930.0 L589.5 935.8 L590.5 929.6 L590.5 921.5 L591.5 919.2 L591.5 922.3 L592.5 925.7 L592.5 933.3 L593.5 932.5 L593.5 934.3 L594.5 935.1 L594.5 925.1 L595.5 927.3 L595.5 870.2 L596.5 856.4 L596.5 893.9 L597.5 914.5 L597.5 926.1 L598.5 925.4 L598.5 934.4 L599.5 938.4 L599.5 932.9 L600.5 932.3 L600.5 923.8 L601.5 925.8 L601.5 920.8 L602.5 923.3 L602.5 941.8 L603.5 937.6 L603.5 930.1 L604.5 929.9 L604.5 935.7 L605.5 932.3 L605.5 938.9 L606.5 939.1 L606.5 933.9 L607.5 933.9 L607.5 927.9 L608.5 927.7 L608.5 930.5 L609.5 926.2 L609.5 932.1 L610.5 929.9 L610.5 937.4 L611.5 941.4 L611.5 930.8 L612.5 931.0 L612.5 928.3 L613.5 927.7 L613.5 936.1 L614.5 925.9 L614.5 920.3 L615.5 919.6 L615.5 929.3 L616.5 928.7 L616.5 857.7 L617.5 836.5 L617.5 884.4 L618.5 908.9 L618.5 925.9 L619.5 922.6 L619.5 932.2 L620.5 934.6 L620.5 927.2 L621.5 932.2 L621.5 927.2 L622.5 928.7 L622.5 931.4 L623.5 927.3 L623.5 934.3 L624.5 934.5 L624.5 928.7 L625.5 931.7 L625.5 934.5 L626.5 932.2 L626.5 925.8 L627.5 934.4 L627.5 936.1 L628.5 935.1 L628.5 925.2 L629.5 925.8 L629.5 941.6 L630.5 940.4 L630.5 925.9 L631.5 928.7 L631.5 934.3 L632.5 933.2 L632.5 929.8 L633.5 927.1 L633.5 931.5 L634.5 932.8 L634.5 929.1 L635.5 929.5 L635.5 854.8 L636.5 850.2 L636.5 920.3 L637.5 917.1 L637.5 927.4 L638.5 924.6 L638.5 931.5 L639.5 932.4 L639.5 895.1 L640.5 909.6 L640.5 936.7 L641.5 936.4 L641.5 940.5 L642.5 942.3 L642.5 931.8 L643.5 931.4 L643.5 937.1 L644.5 940.7 L644.5 932.4 L645.5 930.4 L645.5 923.3 L646.5 927.0 L646.5 936.9 L647.5 927.2 L647.5 937.1 L648.5 934.0 L648.5 920.5 L649.5 925.1 L649.5 942.6 L650.5 924.8 L650.5 930.1 L651.5 930.5 L651.5 915.0 L652.5 925.7 L652.5 862.5 L653.5 853.1 L653.5 923.3 L654.5 924.0 L654.5 934.0 L655.5 929.8 L655.5 926.3 L656.5 935.9 L656.5 923.5 L657.5 932.7 L657.5 937.1 L658.5 938.0 L658.5 941.4 L659.5 940.5 L659.5 930.6 L660.5 936.2 L660.5 932.8 L661.5 940.1 L661.5 929.5 L662.5 929.9 L662.5 938.4 L663.5 939.3 L663.5 926.1 L664.5 922.9 L664.5 928.6 L665.5 925.9 L665.5 935.6 L666.5 925.6 L666.5 917.0 L667.5 922.8 L667.5 933.8 L668.5 922.3 L668.5 858.8 L669.5 876.7 L669.5 933.8 L670.5 920.6 L670.5 933.9 L671.5 921.6 L671.5 931.9 L672.5 925.9 L672.5 938.4 L673.5 939.7 L673.5 929.1 L674.5 943.8 L674.5 932.0 L675.5 934.4 L675.5 929.4 L676.5 931.4 L676.5 923.1 L677.5 922.6 L677.5 933.1 L678.5 927.8 L678.5 942.0 L679.5 941.8 L679.5 929.4 L680.5 931.0 L680.5 939.2 L681.5 929.7 L681.5 924.3 L682.5 929.8 L682.5 845.4 L683.5 843.1 L683.5 931.1 L684.5 932.1 L684.5 923.8 L685.5 933.0 L685.5 928.7 L686.5 932.4 L686.5 938.5 L687.5 929.5 L687.5 937.4 L688.5 930.0 L688.5 941.0 L689.5 937.0 L689.5 928.0 L690.5 937.5 L690.5 930.0 L691.5 933.1 L691.5 942.7 L692.5 929.7 L692.5 935.0 L693.5 924.8 L693.5 941.6 L694.5 939.6 L694.5 923.1 L695.5 931.7 L695.5 913.8 L696.5 862.1 L696.5 930.9 L697.5 926.4 L697.5 933.0 L698.5 931.1 L698.5 941.4 L699.5 940.1 L699.5 925.3 L700.5 932.6 L700.5 941.1 L701.5 933.3 L701.5 939.9 L702.5 938.1 L702.5 931.3 L703.5 938.1 L703.5 926.2 L704.5 935.8 L704.5 923.9 L705.5 942.4 L705.5 927.4 L706.5 920.2 L706.5 938.0 L707.5 933.2 L707.5 918.0 L708.5 935.9 L708.5 853.1 L709.5 896.5 L709.5 933.3 L710.5 928.2 L710.5 938.1 L711.5 936.6 L711.5 927.2 L712.5 946.3 L712.5 905.2 L713.5 926.2 L713.5 934.2 L714.5 930.7 L714.5 946.7 L715.5 938.9 L715.5 929.2 L716.5 926.1 L716.5 943.0 L717.5 936.8 L717.5 927.8 L718.5 939.3 L718.5 929.2 L719.5 931.3 L719.5 891.2 L720.5 858.0 L720.5 928.1 L721.5 925.3 L721.5 937.4 L722.5 930.3 L722.5 945.1 L723.5 945.5 L723.5 931.7 L724.5 947.9 L724.5 926.7 L725.5 924.7 L725.5 945.7 L726.5 925.8 L726.5 932.8 L727.5 926.0 L727.5 934.1 L728.5 927.1 L728.5 941.7 L729.5 939.4 L729.5 927.4 L730.5 932.6 L730.5 855.2 L731.5 852.1 L731.5 930.1 L732.5 928.4 L732.5 942.2 L733.5 930.1 L733.5 941.1 L734.5 939.1 L734.5 928.0 L735.5 927.4 L735.5 941.4 L736.5 928.1 L736.5 937.3 L737.5 939.3 L737.5 926.1 L738.5 937.7 L738.5 925.2 L739.5 943.5 L739.5 926.9 L740.5 936.8 L740.5 915.5 L741.5 931.4 L741.5 865.6 L742.5 918.6 L742.5 933.9 L743.5 927.6 L743.5 939.7 L744.5 938.6 L744.5 930.8 L745.5 941.9 L745.5 926.2 L746.5 926.1 L746.5 936.5 L747.5 935.5 L747.5 926.0 L748.5 926.8 L748.5 944.7 L749.5 930.7 L749.5 925.2 L750.5 930.9 L750.5 841.1 L751.5 843.1 L751.5 931.3 L752.5 925.5 L752.5 936.7 L753.5 938.7 L753.5 929.7 L754.5 934.0 L754.5 942.2 L755.5 941.5 L755.5 926.0 L756.5 929.2 L756.5 939.8 L757.5 927.2 L757.5 942.9 L758.5 927.7 L758.5 941.7 L759.5 935.9 L759.5 886.8 L760.5 924.8 L760.5 756.2 L761.5 927.3 L761.5 942.7 L762.5 931.8 L762.5 940.9 L763.5 942.1 L763.5 904.8 L764.5 926.1 L764.5 939.1 L765.5 924.9 L765.5 937.5 L766.5 926.3 L766.5 943.0 L767.5 937.3 L767.5 928.2 L768.5 934.1 L768.5 874.1 L769.5 895.2 L769.5 940.1 L770.5 930.2 L770.5 938.5 L771.5 927.5 L771.5 943.2 L772.5 942.8 L772.5 927.5 L773.5 941.3 L773.5 930.4 L774.5 931.3 L774.5 942.2 L775.5 942.8 L775.5 927.8 L776.5 937.6 L776.5 901.7 L777.5 864.4 L777.5 935.7 L778.5 931.8 L778.5 941.7 L779.5 941.4 L779.5 928.5 L780.5 928.3 L780.5 938.6 L781.5 932.1 L781.5 946.7 L782.5 933.2 L782.5 940.2 L783.5 935.6 L783.5 931.0 L784.5 939.7 L784.5 899.1 L785.5 870.3 L785.5 946.7 L786.5 940.9 L786.5 932.5 L787.5 935.9 L787.5 928.1 L788.5 936.9 L788.5 928.6 L789.5 935.3 L789.5 942.0 L790.5 942.7 L790.5 930.5 L791.5 941.4 L791.5 924.6 L792.5 946.2 L792.5 867.3 L793.5 933.4 L793.5 945.3 L794.5 928.3 L794.5 940.7 L795.5 944.8 L795.5 924.1 L796.5 940.7 L796.5 928.4 L797.5 926.9 L797.5 944.8 L798.5 933.2 L798.5 942.7 L799.5 947.2 L799.5 872.0 L800.5 867.5 L800.5 941.0 L801.5 939.5 L801.5 927.4 L802.5 930.8 L802.5 947.9 L803.5 937.7 L803.5 911.3 L804.5 933.3 L804.5 941.2 L805.5 939.2 L805.5 923.8 L806.5 941.5 L806.5 878.6 L807.5 869.2 L807.5 941.1 L808.5 940.3 L808.5 932.3 L809.5 942.7 L809.5 927.5 L810.5 929.1 L810.5 941.7 L811.5 930.8 L811.5 942.3 L812.5 940.7 L812.5 933.1 L813.5 946.6 L813.5 891.6 L814.5 931.2 L814.5 947.1 L815.5 930.7 L815.5 944.1 L816.5 944.7 L816.5 931.1 L817.5 933.0 L817.5 946.6 L818.5 941.0 L818.5 928.9 L819.5 932.9 L819.5 944.2 L820.5 944.3 L820.5 886.2 L821.5 933.3 L821.5 949.2 L822.5 940.0 L822.5 933.0 L823.5 931.4 L823.5 942.3 L824.5 938.7 L824.5 932.4 L825.5 933.7 L825.5 943.2 L826.5 944.8 L826.5 895.1 L827.5 929.4 L827.5 945.4 L828.5 944.0 L828.5 924.7 L829.5 943.3 L829.5 928.3 L830.5 943.2 L830.5 932.3 L831.5 934.7 L831.5 946.6 L832.5 944.4 L832.5 879.7 L833.5 936.0 L833.5 947.0 L834.5 945.4 L834.5 932.4 L835.5 933.1 L835.5 951.2 L836.5 934.8 L836.5 947.4 L837.5 933.3 L837.5 947.4 L838.5 948.2 L838.5 875.8 L839.5 937.1 L839.5 948.3 L840.5 935.6 L840.5 945.5 L841.5 947.5 L841.5 931.0 L842.5 944.3 L842.5 932.1 L843.5 933.8 L843.5 948.2 L844.5 944.5 L844.5 889.1 L845.5 942.2 L845.5 931.2 L846.5 932.5 L846.5 947.2 L847.5 931.3 L847.5 945.7 L848.5 932.0 L848.5 953.0 L849.5 949.5 L849.5 914.1 L850.5 944.8 L850.5 932.8 L851.5 934.3 L851.5 944.1 L852.5 938.0 L852.5 945.0 L853.5 950.9 L853.5 938.4 L854.5 947.7 L854.5 882.4 L855.5 879.0 L855.5 946.5 L856.5 934.8 L856.5 948.2 L857.5 935.3 L857.5 952.6 L858.5 943.0 L858.5 934.5 L859.5 932.8 L859.5 941.4 L860.5 943.9 L860.5 908.1 L861.5 933.3 L861.5 950.6 L862.5 945.9 L862.5 935.5 L863.5 947.7 L863.5 934.7 L864.5 935.6 L864.5 949.8 L865.5 946.3 L865.5 878.2 L866.5 932.2 L866.5 946.2 L867.5 934.6 L867.5 946.1 L868.5 947.9 L868.5 936.1 L869.5 934.4 L869.5 943.8 L870.5 946.9 L870.5 892.4 L871.5 947.2 L871.5 934.8 L872.5 935.0 L872.5 951.3 L873.5 937.6 L873.5 949.0 L874.5 950.6 L874.5 882.4 L875.5 902.4 L875.5 946.0 L876.5 937.6 L876.5 949.7 L877.5 952.6 L877.5 938.0 L878.5 938.4 L878.5 949.2 L879.5 943.7 L879.5 877.1 L880.5 936.5 L880.5 951.5 L881.5 936.7 L881.5 949.0 L882.5 949.0 L882.5 934.6 L883.5 947.2 L883.5 920.0 L884.5 891.0 L884.5 948.9 L885.5 944.9 L885.5 937.8 L886.5 947.4 L886.5 937.1 L887.5 945.7 L887.5 934.9 L888.5 950.6 L888.5 892.4 L889.5 939.6 L889.5 949.9 L890.5 937.9 L890.5 948.5 L891.5 938.1 L891.5 948.8 L892.5 945.3 L892.5 888.8 L893.5 936.1 L893.5 944.6 L894.5 933.8 L894.5 951.0 L895.5 944.7 L895.5 932.9 L896.5 947.4 L896.5 903.0 L897.5 892.9 L897.5 946.7 L898.5 951.2 L898.5 940.6 L899.5 947.6 L899.5 933.7 L900.5 937.8 L900.5 951.5 L901.5 949.9 L901.5 887.3 L902.5 938.0 L902.5 949.9 L903.5 940.1 L903.5 948.3 L904.5 947.9 L904.5 939.7 L905.5 948.6 L905.5 889.1 L906.5 948.0 L906.5 939.0 L907.5 946.1 L907.5 937.6 L908.5 950.2 L908.5 926.7 L909.5 894.4 L909.5 951.7 L910.5 952.5 L910.5 933.6 L911.5 945.9 L911.5 934.9 L912.5 949.1 L912.5 896.1 L913.5 919.1 L913.5 946.4 L914.5 936.9 L914.5 946.3 L915.5 933.1 L915.5 942.2 L916.5 948.8 L916.5 893.4 L917.5 949.7 L917.5 935.8 L918.5 934.1 L918.5 949.4 L919.5 937.6 L919.5 949.0 L920.5 948.1 L920.5 896.2 L921.5 944.7 L921.5 933.6 L922.5 939.3 L922.5 950.8 L923.5 947.9 L923.5 898.9 L924.5 898.0 L924.5 953.1 L925.5 933.1 L925.5 950.3 L926.5 949.8 L926.5 935.6 L927.5 949.2 L927.5 896.7 L928.5 947.6 L928.5 937.7 L929.5 946.9 L929.5 937.7 L930.5 949.8 L930.5 900.8 L931.5 892.9 L931.5 946.9 L932.5 945.8 L932.5 935.9 L933.5 938.1 L933.5 950.2 L934.5 949.7 L934.5 906.4 L935.5 953.1 L935.5 936.5 L936.5 937.5 L936.5 951.5 L937.5 947.3 L937.5 897.0 L938.5 940.5 L938.5 951.2 L939.5 949.6 L939.5 940.2 L940.5 949.8 L940.5 914.0 L941.5 899.8 L941.5 948.4 L942.5 951.8 L942.5 933.2 L943.5 937.1 L943.5 948.8 L944.5 946.5 L944.5 896.2 L945.5 949.2 L945.5 936.0 L946.5 946.0 L946.5 935.6 L947.5 947.0 L947.5 899.8 L948.5 938.9 L948.5 949.1 L949.5 951.5 L949.5 936.9 L950.5 949.3 L950.5 899.2 L951.5 949.6 L951.5 932.8 L952.5 951.7 L952.5 934.4 L953.5 948.5 L953.5 914.6 L954.5 950.0 L954.5 934.9 L955.5 937.7 L955.5 948.8 L956.5 949.2 L956.5 899.2 L957.5 949.7 L957.5 937.2 L958.5 950.2 L958.5 934.0 L959.5 948.8 L959.5 900.0 L960.5 952.0 L960.5 938.9 L961.5 947.7 L961.5 936.2 L962.5 949.7 L962.5 900.6 L963.5 948.0 L963.5 937.2 L964.5 950.3 L964.5 936.9 L965.5 955.0 L965.5 902.7 L966.5 948.7 L966.5 933.3 L967.5 947.7 L967.5 936.6 L968.5 951.0 L968.5 909.7 L969.5 949.4 L969.5 938.5 L970.5 950.9 L970.5 915.1 L971.5 949.8 L971.5 931.8 L972.5 949.5 L972.5 936.4 L973.5 947.4 L973.5 896.2 L974.5 937.1 L974.5 949.4 L975.5 935.3 L975.5 947.5 L976.5 945.9 L976.5 908.5 L977.5 949.3 L977.5 936.7 L978.5 950.4 L978.5 893.2 L979.5 894.5 L979.5 947.6 L980.5 934.8 L980.5 947.3 L981.5 946.5 L981.5 904.4 L982.5 937.4 L982.5 951.0 L983.5 949.9 L983.5 935.5 L984.5 946.1 L984.5 892.5 L985.5 948.4 L985.5 935.3 L986.5 947.9 L986.5 898.0 L987.5 934.2 L987.5 948.8 L988.5 949.8 L988.5 938.0 L989.5 946.9 L989.5 915.0 L990.5 936.2 L990.5 948.6 L991.5 944.7 L991.5 911.6 L992.5 949.9 L992.5 936.4 L993.5 937.1 L993.5 948.8 L994.5 945.8 L994.5 918.8 L995.5 946.5 L995.5 935.8 L996.5 952.4 L996.5 914.3 L997.5 949.8 L997.5 938.4 L998.5 949.7 L998.5 917.9 L999.5 950.1 L999.5 933.6 L1000.5 936.6 L1000.5 946.9 L1001.5 950.1 L1001.5 919.1 L1002.5 947.7 L1002.5 932.5 L1003.5 950.6 L1003.5 913.8 L1004.5 948.3 L1004.5 939.5 L1005.5 947.5 L1005.5 911.4 L1006.5 936.4 L1006.5 951.4 L1007.5 935.2 L1007.5 954.4 L1008.5 949.0 L1008.5 902.3 L1009.5 951.4 L1009.5 937.9 L1010.5 948.7 L1010.5 921.4 L1011.5 937.1 L1011.5 950.0 L1012.5 947.1 L1012.5 917.0 L1013.5 936.3 L1013.5 948.1 L1014.5 948.0 L1014.5 903.9 L1015.5 937.3 L1015.5 949.4 L1016.5 948.0 L1016.5 919.7 L1017.5 937.7 L1017.5 952.9 L1018.5 949.5 L1018.5 904.4 L1019.5 951.5 L1019.5 940.0 L1020.5 949.5 L1020.5 908.2 L1021.5 906.3 L1021.5 949.3 L1022.5 951.8 L1022.5 933.4 L1023.5 947.5 L1023.5 901.1 L1024.5 949.9 L1024.5 935.7 L1025.5 947.4 L1025.5 912.1 L1026.5 946.8 L1026.5 935.0 L1027.5 950.4 L1027.5 907.8 L1028.5 933.5 L1028.5 952.4 L1029.5 951.8 L1029.5 902.0 L1030.5 936.1 L1030.5 952.3 L1031.5 952.6 L1031.5 916.5 L1032.5 935.9 L1032.5 948.6 L1033.5 950.1 L1033.5 902.6 L1034.5 948.3 L1034.5 915.8 L1035.5 920.2 L1035.5 949.2 L1036.5 947.8 L1036.5 907.2 L1037.5 932.2 L1037.5 947.3 L1038.5 949.4 L1038.5 900.5 L1039.5 948.5 L1039.5 937.2 L1040.5 952.0 L1040.5 901.2 L1041.5 933.3 L1041.5 951.7 L1042.5 951.0 L1042.5 905.8 L1043.5 934.6 L1043.5 949.1 L1044.5 950.8 L1044.5 920.0 L1045.5 932.7 L1045.5 947.9 L1046.5 948.3 L1046.5 907.2 L1047.5 948.9 L1047.5 919.0 L1048.5 933.9 L1048.5 945.7 L1049.5 948.7 L1049.5 917.0 L1050.5 947.5 L1050.5 932.7 L1051.5 949.7 L1051.5 924.2 L1052.5 946.1 L1052.5 932.5 L1053.5 952.1 L1053.5 919.2 L1054.5 947.6 L1054.5 917.2 L1055.5 923.2 L1055.5 948.8 L1056.5 948.1 L1056.5 909.6 L1057.5 951.6 L1057.5 935.5 L1058.5 951.2 L1058.5 918.1 L1059.5 951.7 L1059.5 934.3 L1060.5 951.8 L1060.5 923.9 L1061.5 920.8 L1061.5 949.1 L1062.5 932.3 L1062.5 951.2 L1063.5 946.8 L1063.5 911.7 L1064.5 933.2 L1064.5 948.1 L1065.5 927.4 L1065.5 948.1 L1066.5 951.1 L1066.5 922.2 L1067.5 949.2 L1067.5 931.0 L1068.5 950.4 L1068.5 907.5 L1069.5 949.9 L1069.5 917.9 L1070.5 931.4 L1070.5 951.0 L1071.5 948.1 L1071.5 907.6 L1072.5 946.4 L1072.5 920.8 L1073.5 934.7 L1073.5 950.3 L1074.5 946.3 L1074.5 910.8 L1075.5 946.7 L1075.5 932.6 L1076.5 948.4 L1076.5 913.8 L1077.5 947.5 L1077.5 922.7 L1078.5 930.5 L1078.5 948.6 L1079.5 920.0 L1079.5 952.0 L1080.5 948.7 L1080.5 925.6 L1081.5 934.5 L1081.5 948.1 L1082.5 948.7 L1082.5 908.0 L1083.5 948.2 L1083.5 925.6 L1084.5 946.7 L1084.5 915.3 L1085.5 920.1 L1085.5 946.7 L1086.5 951.9 L1086.5 921.0 L1087.5 946.9 L1087.5 914.5 L1088.5 947.6 L1088.5 931.5 L1089.5 924.1 L1089.5 948.3 L1090.5 949.5 L1090.5 919.2 L1091.5 946.9 L1091.5 930.4 L1092.5 955.3 L1092.5 915.3 L1093.5 949.3 L1093.5 923.7 L1094.5 949.0 L1094.5 915.8 L1095.5 933.7 L1095.5 949.4 L1096.5 950.1 L1096.5 915.7 L1097.5 947.8 L1097.5 913.3 L1098.5 952.7 L1098.5 911.7 L1099.5 925.8 L1099.5 949.4 L1100.5 951.4 L1100.5 923.2 L1101.5 947.0 L1101.5 920.8 L1102.5 945.2 L1102.5 911.2 L1103.5 924.1 L1103.5 950.2 L1104.5 947.7 L1104.5 915.1 L1105.5 950.0 L1105.5 913.8 L1106.5 953.3 L1106.5 914.8 L1107.5 927.5 L1107.5 947.1 L1108.5 948.4 L1108.5 919.5 L1109.5 947.8 L1109.5 925.7 L1110.5 931.4 L1110.5 950.5 L1111.5 918.1 L1111.5 947.8 L1112.5 948.0 L1112.5 921.4 L1113.5 918.7 L1113.5 947.2 L1114.5 947.1 L1114.5 917.4 L1115.5 950.1 L1115.5 920.0 L1116.5 933.4 L1116.5 949.0 L1117.5 946.1 L1117.5 922.8 L1118.5 921.6 L1118.5 949.7 L1119.5 949.2 L1119.5 926.2 L1120.5 944.9 L1120.5 883.1 L1121.5 922.1 L1121.5 950.8 L1122.5 948.1 L1122.5 923.6 L1123.5 947.8 L1123.5 927.1 L1124.5 914.5 L1124.5 947.2 L1125.5 949.3 L1125.5 915.8 L1126.5 952.3 L1126.5 924.1 L1127.5 926.0 L1127.5 948.2 L1128.5 925.3 L1128.5 947.5 L1129.5 951.2 L1129.5 914.8 L1130.5 926.2 L1130.5 951.2 L1131.5 923.0 L1131.5 950.6 L1132.5 918.9 L1132.5 949.7 L1133.5 949.2 L1133.5 928.4 L1134.5 949.2 L1134.5 914.5 L1135.5 947.8 L1135.5 927.5 L1136.5 925.1 L1136.5 950.9 L1137.5 946.4 L1137.5 920.3 L1138.5 948.0 L1138.5 914.8 L1139.5 948.5 L1139.5 922.5 L1140.5 951.5 L1140.5 922.8 L1141.5 947.0 L1141.5 927.4 L1142.5 950.6 L1142.5 922.3 L1143.5 929.4 L1143.5 950.1 L1144.5 954.9 L1144.5 924.8 L1145.5 916.7 L1145.5 946.0 L1146.5 917.8 L1146.5 950.0 L1147.5 951.1 L1147.5 913.3 L1148.5 948.6 L1148.5 922.6 L1149.5 946.8 L1149.5 914.0 L1150.5 954.6 L1150.5 917.2 L1151.5 945.9 L1151.5 918.6 L1152.5 914.4 L1152.5 946.5 L1153.5 947.1 L1153.5 922.2 L1154.5 952.1 L1154.5 924.5 L1155.5 926.6 L1155.5 948.0 L1156.5 946.9 L1156.5 931.6 L1157.5 950.0 L1157.5 917.2 L1158.5 917.4 L1158.5 948.7 L1159.5 922.2 L1159.5 949.1 L1160.5 949.1 L1160.5 922.7 L1161.5 947.6 L1161.5 923.9 L1162.5 920.9 L1162.5 949.4 L1163.5 914.0 L1163.5 951.2 L1164.5 949.2 L1164.5 923.0 L1165.5 948.3 L1165.5 927.2 L1166.5 947.5 L1166.5 922.8 L1167.5 947.7 L1167.5 918.0 L1168.5 916.1 L1168.5 947.7 L1169.5 924.3 L1169.5 950.1 L1170.5 953.0 L1170.5 917.3 L1171.5 946.4 L1171.5 922.3 L1172.5 949.5 L1172.5 921.7 L1173.5 946.7 L1173.5 925.7 L1174.5 950.8 L1174.5 925.9 L1175.5 950.1 L1175.5 922.1 L1176.5 952.2 L1176.5 924.2 L1177.5 953.6 L1177.5 924.8 L1178.5 952.2 L1178.5 912.4 L1179.5 920.6 L1179.5 948.1 L1180.5 947.5 L1180.5 922.5 L1181.5 949.0 L1181.5 920.9 L1182.5 924.1 L1182.5 949.0 L1183.5 921.2 L1183.5 950.7 L1184.5 949.9 L1184.5 925.3 L1185.5 948.9 L1185.5 921.9 L1186.5 949.7 L1186.5 932.3 L1187.5 954.4 L1187.5 921.2 L1188.5 952.6 L1188.5 920.0 L1189.5 926.9 L1189.5 949.8 L1190.5 949.1 L1190.5 922.0 L1191.5 927.2 L1191.5 951.9 L1192.5 927.3 L1192.5 947.4 L1193.5 952.3 L1193.5 920.4 L1194.5 949.7 L1194.5 919.9 L1195.5 922.8 L1195.5 949.2 L1196.5 949.9 L1196.5 931.5 L1197.5 948.4 L1197.5 927.6 L1198.5 930.7 L1198.5 952.4 L1199.5 950.0 L1199.5 923.5 L1200.5 922.5 L1200.5 951.2 L1201.5 948.9 L1201.5 911.6 L1202.5 949.7 L1202.5 926.0 L1203.5 950.5 L1203.5 919.3 L1204.5 920.8 L1204.5 950.9 L1205.5 948.6 L1205.5 922.8 L1206.5 930.6 L1206.5 950.2 L1207.5 930.3 L1207.5 951.3 L1208.5 948.8 L1208.5 919.0 L1209.5 951.7 L1209.5 922.3 L1210.5 948.2 L1210.5 925.4 L1211.5 952.1 L1211.5 913.6 L1212.5 949.4 L1212.5 924.9 L1213.5 927.7 L1213.5 952.1 L1214.5 929.1 L1214.5 949.8 L1215.5 952.9 L1215.5 922.2 L1216.5 951.5 L1216.5 919.2 L1217.5 928.9 L1217.5 952.3 L1218.5 951.6 L1218.5 921.2 L1219.5 923.0 L1219.5 950.7 L1220.5 950.8 L1220.5 921.8 L1221.5 950.7 L1221.5 911.6 L1222.5 952.5 L1222.5 924.3 L1223.5 950.9 L1223.5 923.9 L1224.5 951.3 L1224.5 925.0 L1225.5 950.6 L1225.5 922.8 L1226.5 952.3 L1226.5 922.1 L1227.5 920.5 L1227.5 950.1 L1228.5 953.3 L1228.5 922.0 L1229.5 951.5 L1229.5 928.1 L1230.5 955.0 L1230.5 924.9 L1231.5 951.5 L1231.5 922.4 L1232.5 933.3 L1232.5 953.7 L1233.5 950.3 L1233.5 933.4 L1234.5 951.2 L1234.5 933.9 L1235.5 952.8 L1235.5 931.8 L1236.5 936.4 L1236.5 952.1 L1237.5 952.7 L1237.5 925.7 L1238.5 954.2 L1238.5 933.4 L1239.5 951.8 L1239.5 922.8 L1240.5 950.6 L1240.5 932.4 L1241.5 932.8 L1241.5 956.1 L1242.5 951.0 L1242.5 915.4 L1243.5 950.7 L1243.5 933.5 L1244.5 951.1 L1244.5 920.8 L1245.5 951.3 L1245.5 933.0 L1246.5 954.9 L1246.5 933.3 L1247.5 951.2 L1247.5 919.3 L1248.5 934.9 L1248.5 952.5 L1249.5 931.5 L1249.5 951.0 L1250.5 952.9 L1250.5 931.7 L1251.5 934.3 L1251.5 952.5 L1252.5 932.6 L1252.5 954.3 L1253.5 952.9 L1253.5 932.5 L1254.5 935.9 L1254.5 951.0 L1255.5 954.1 L1255.5 932.5 L1256.5 950.9 L1256.5 933.0 L1257.5 951.6 L1257.5 923.8 L1258.5 951.8 L1258.5 912.6 L1259.5 952.0 L1259.5 923.3 L1260.5 933.5 L1260.5 951.6 L1261.5 951.4 L1261.5 936.0 L1262.5 953.0 L1262.5 923.0 L1263.5 953.5 L1263.5 931.5 L1264.5 952.1 L1264.5 931.1 L1265.5 953.7 L1265.5 928.9 L1266.5 931.7 L1266.5 952.7 L1267.5 955.6 L1267.5 924.3 L1268.5 953.3 L1268.5 931.9 L1269.5 952.4 L1269.5 913.0 L1270.5 932.8 L1270.5 952.3 L1271.5 952.4 L1271.5 932.0 L1272.5 951.0 L1272.5 921.5 L1273.5 932.9 L1273.5 952.6 L1274.5 955.2 L1274.5 924.4 L1275.5 951.7 L1275.5 932.6 L1276.5 933.1 L1276.5 953.0 L1277.5 951.9 L1277.5 931.9 L1278.5 953.7 L1278.5 931.4 L1279.5 935.5 L1279.5 951.6 L1280.5 951.7 L1280.5 911.7 L1281.5 933.6 L1281.5 956.7 L1282.5 934.7 L1282.5 952.4 L1283.5 950.6 L1283.5 931.4 L1284.5 932.8 L1284.5 955.2 L1285.5 933.9 L1285.5 951.6 L1286.5 952.3 L1286.5 935.2 L1287.5 930.8 L1287.5 953.1 L1288.5 949.8 L1288.5 930.6 L1289.5 954.6 L1289.5 931.8 L1290.5 951.3 L1290.5 933.9 L1291.5 951.9 L1291.5 930.2 L1292.5 949.2 L1292.5 912.9 L1293.5 931.8 L1293.5 952.7 L1294.5 949.5 L1294.5 931.1 L1295.5 950.5 L1295.5 912.7 L1296.5 949.4 L1296.5 931.4 L1297.5 950.3 L1297.5 930.4 L1298.5 951.4 L1298.5 917.6 L1299.5 949.5 L1299.5 930.7 L1300.5 933.1 L1300.5 948.9 L1301.5 930.9 L1301.5 951.1 L1302.5 930.6 L1302.5 948.0 L1303.5 929.3 L1303.5 943.7 L1304.5 942.1 L1304.5 898.9 L1305.5 945.6 L1305.5 896.5 L1306.5 929.9 L1306.5 948.5 L1307.5 932.9 L1307.5 949.4 L1308.5 951.0 L1308.5 931.8 L1309.5 952.1 L1309.5 934.6 L1310.5 932.6 L1310.5 957.4 L1311.5 951.4 L1311.5 933.0 L1312.5 952.8 L1312.5 935.9 L1313.5 952.1 L1313.5 933.7 L1314.5 952.5 L1314.5 938.0 L1315.5 952.7 L1315.5 917.3 L1316.5 954.6 L1316.5 936.1 L1317.5 938.6 L1317.5 954.6 L1318.5 954.5 L1318.5 937.5 L1319.5 938.9 L1319.5 954.7 L1320.5 939.8 L1320.5 955.2 L1321.5 956.5 L1321.5 939.2 L1322.5 939.8 L1322.5 955.6 L1323.5 938.7 L1323.5 957.9 L1324.5 957.9 L1324.5 938.7 L1325.5 936.5 L1325.5 956.4 L1326.5 959.2 L1326.5 937.6 L1327.5 939.5 L1327.5 959.9" fill="none" stroke="#00ffff" stroke-width="1" stroke-linejoin="round" shape-rendering="crispEdges"/><text x="1307" y="640" font-family="Liberation Sans" font-weight="bold" font-size="15" fill="#fff" textLength="19" lengthAdjust="spacingAndGlyphs">MI</text><path d="M1306 631.5 h21 M1306 634 h21 M1306 636.5 h21" stroke="#000" stroke-width="0.9"/></svg>
<div class="t ab cy" style="left:22px;top:602.2px;letter-spacing:0.3px">A(dBV)</div>
<div class="t ab cy" style="left:273.3px;top:602.2px;font-size:11px;letter-spacing:-0.706px;font-weight:bold;">A:</div>
<div class="t ab cy" style="left:288.6px;top:602.2px;font-size:11px;letter-spacing:-0.150px;font-weight:bold;">Peak Frequency=</div>
<div class="t ab cy" style="left:387.2px;top:602.2px;font-size:11px;letter-spacing:-0.240px;font-weight:bold;">1.001560</div>
<div class="t ab cy" style="left:441px;top:602.2px;font-size:11px;letter-spacing:-0.380px;font-weight:bold;">kHz</div>
<div class="t ab cy" style="left:465.8px;top:602.2px;font-size:11px;letter-spacing:-0.377px;font-weight:bold;">THD=</div>
<div class="t ab cy" style="left:509.3px;top:602.2px;font-size:11px;letter-spacing:-0.162px;font-weight:bold;">0.05576 % (</div>
<div class="t ab cy" style="left:579px;top:602.2px;font-size:11px;letter-spacing:-0.041px;font-weight:bold;">-65.07 dB)</div>
<div class="t ab cy" style="left:638.5px;top:602.2px;font-size:11px;letter-spacing:-0.139px;font-weight:bold;">THD+N=</div>
<div class="t ab cy" style="left:690.3px;top:602.2px;font-size:11px;letter-spacing:-0.112px;font-weight:bold;">14.69998 % (</div>
<div class="t ab cy" style="left:765.9px;top:602.2px;font-size:11px;letter-spacing:0.015px;font-weight:bold;">-16.65 dB)</div>
<div class="t ab cy" style="left:826.2px;top:602.2px;font-size:11px;letter-spacing:-0.330px;font-weight:bold;">SINAD=</div>
<div class="t ab cy" style="left:880.5px;top:602.2px;font-size:11px;letter-spacing:-0.335px;font-weight:bold;">16.65 dB</div>
<div class="t ab cy" style="left:932px;top:602.2px;font-size:11px;letter-spacing:-0.549px;font-weight:bold;">SNR=</div>
<div class="t ab cy" style="left:975.6px;top:602.2px;font-size:11px;letter-spacing:-0.306px;font-weight:bold;">16.56 dB</div>
<div class="t ab cy" style="left:1026.5px;top:602.2px;font-size:11px;letter-spacing:-0.493px;font-weight:bold;">NL=</div>
<div class="t ab cy" style="left:1058px;top:602.2px;font-size:11px;letter-spacing:-0.005px;font-weight:bold;">-78.39 dBV</div>
<div class="t ab cy" style="left:0px;top:620.0px;width:58px;text-align:right;">0</div>
<div class="t ab cy" style="left:0px;top:659.2px;width:58px;text-align:right;">-20</div>
<div class="t ab cy" style="left:0px;top:698.4px;width:58px;text-align:right;">-40</div>
<div class="t ab cy" style="left:0px;top:737.6px;width:58px;text-align:right;">-60</div>
<div class="t ab cy" style="left:0px;top:776.8px;width:58px;text-align:right;">-80</div>
<div class="t ab cy" style="left:0px;top:816.0px;width:58px;text-align:right;">-100</div>
<div class="t ab cy" style="left:0px;top:855.2px;width:58px;text-align:right;">-120</div>
<div class="t ab cy" style="left:0px;top:894.4000000000001px;width:58px;text-align:right;">-140</div>
<div class="t ab cy" style="left:0px;top:933.6px;width:58px;text-align:right;">-160</div>
<div class="t ab cy" style="left:0px;top:972.8px;width:58px;text-align:right;">-180</div>
<div class="t ab cy" style="left:0px;top:1012.0px;width:58px;text-align:right;">-200</div>
<div class="t ab wh" style="left:29.0px;top:1021px;width:60px;text-align:center;">20</div>
<div class="t ab wh" style="left:192.8716955711451px;top:1021px;width:60px;text-align:center;">50</div>
<div class="t ab wh" style="left:316.8358477855726px;top:1021px;width:60px;text-align:center;">100</div>
<div class="t ab wh" style="left:440.8px;top:1021px;width:60px;text-align:center;">200</div>
<div class="t ab wh" style="left:604.6716955711452px;top:1021px;width:60px;text-align:center;">500</div>
<div class="t ab wh" style="left:728.6358477855725px;top:1021px;width:60px;text-align:center;">1k</div>
<div class="t ab wh" style="left:852.6px;top:1021px;width:60px;text-align:center;">2k</div>
<div class="t ab wh" style="left:1016.4716955711451px;top:1021px;width:60px;text-align:center;">5k</div>
<div class="t ab wh" style="left:1140.4358477855726px;top:1021px;width:60px;text-align:center;">10k</div>
<div class="t ab wh" style="left:1264.4px;top:1021px;width:60px;text-align:center;">20k</div>
<div class="" style="left:13px;top:1031px;width:73px;height:11px;background:#fff"></div>
<div class="t ab" style="left:14.5px;top:1031px;font-size:11px;letter-spacing:-0.025px;font-weight:bold;color:#000">Zero Padding</div>
<div class="t ab wh" style="left:94px;top:1031px;font-size:11px;letter-spacing:-0.002px;font-weight:bold;">Resolution: 0.366211Hz, 0.5Hz (real)</div>
<div class="t ab wh" style="left:578px;top:1031px;font-size:11px;letter-spacing:-0.102px;font-weight:bold;">AMPLITUDE  SPECTRUM in dBV (Vr=1 Vrms)</div>
<div class="t ab wh" style="left:1175px;top:1031px;font-size:11px;letter-spacing:0.063px;font-weight:bold;">Averaged Frames: 14</div>
<div class="t ab wh" style="left:1329px;top:1031px;letter-spacing:1px">Hz</div>
<div class="w10" style="left:1375px;top:123px;width:254px;height:83px;"></div>
<div class="" style="left:1375px;top:155px;width:254px;height:51px;background:#000"></div>
<svg style="position:absolute;left:1383px;top:131px" width="16.0" height="16.0" viewBox="0 0 16 16"><g font-family="Liberation Sans" font-weight="bold" font-size="8.2"><text x="0" y="6" fill="#0000ff" textLength="4.2" lengthAdjust="spacingAndGlyphs">D</text><text x="4.8" y="6" fill="#ff0000" textLength="4.2" lengthAdjust="spacingAndGlyphs">D</text><text x="9.6" y="6" fill="#00e000" textLength="4.2" lengthAdjust="spacingAndGlyphs">P</text></g><circle cx="7.7" cy="11.2" r="2.9" fill="none" stroke="#000" stroke-width="1"/><path d="M9.8 13.4 L12.6 16" stroke="#000" stroke-width="1.3"/><path d="M7.7 9.6 V12.8 M6.1 11.2 H9.3" stroke="#000" stroke-width="1"/></svg>
<div class="t w10t" style="left:1404.3px;top:133.5px;font-size:12.8px;letter-spacing:-0.392px;">Peak Level</div>
<svg style="position:absolute;left:1499px;top:127px" width="130" height="24" viewBox="0 0 130 24"><g stroke="#777" stroke-width="1" fill="none"><path d="M1 11.5 H11"/><rect x="50.5" y="6.5" width="9" height="9"/><path d="M100 6 l10 10 M110 6 l-10 10"/></g></svg>
<div class="mono" style="left:1387.69px;top:163.17px;font-size:38.89px;-webkit-text-stroke:0.66px #00ffff;transform:scaleX(0.9375)">-40.28 dBFS</div>
<div class="w10" style="left:1374px;top:211px;width:255px;height:84px;"></div>
<div class="" style="left:1374px;top:243px;width:255px;height:52px;background:#000"></div>
<svg style="position:absolute;left:1382px;top:219px" width="16.0" height="16.0" viewBox="0 0 16 16"><g font-family="Liberation Sans" font-weight="bold" font-size="8.2"><text x="0" y="6" fill="#0000ff" textLength="4.2" lengthAdjust="spacingAndGlyphs">D</text><text x="4.8" y="6" fill="#ff0000" textLength="4.2" lengthAdjust="spacingAndGlyphs">D</text><text x="9.6" y="6" fill="#00e000" textLength="4.2" lengthAdjust="spacingAndGlyphs">P</text></g><circle cx="7.7" cy="11.2" r="2.9" fill="none" stroke="#000" stroke-width="1"/><path d="M9.8 13.4 L12.6 16" stroke="#000" stroke-width="1.3"/><path d="M7.7 9.6 V12.8 M6.1 11.2 H9.3" stroke="#000" stroke-width="1"/></svg>
<div class="t w10t" style="left:1403.3px;top:221.5px;font-size:12.8px;letter-spacing:-0.106px;">ADC Input</div>
<svg style="position:absolute;left:1499px;top:215px" width="130" height="24" viewBox="0 0 130 24"><g stroke="#777" stroke-width="1" fill="none"><path d="M1 11.5 H11"/><rect x="50.5" y="6.5" width="9" height="9"/><path d="M100 6 l10 10 M110 6 l-10 10"/></g></svg>
<div class="mono" style="left:1387.38px;top:250.48px;font-size:40.06px;-webkit-text-stroke:0.68px #00ffff;transform:scaleX(1.1226)">819.05 µV</div>
<div class="w10" style="left:1376px;top:300px;width:253px;height:80px;"></div>
<div class="" style="left:1376px;top:332px;width:253px;height:48px;background:#000"></div>
<svg style="position:absolute;left:1384px;top:308px" width="16.0" height="16.0" viewBox="0 0 16 16"><g font-family="Liberation Sans" font-weight="bold" font-size="8.2"><text x="0" y="6" fill="#0000ff" textLength="4.2" lengthAdjust="spacingAndGlyphs">D</text><text x="4.8" y="6" fill="#ff0000" textLength="4.2" lengthAdjust="spacingAndGlyphs">D</text><text x="9.6" y="6" fill="#00e000" textLength="4.2" lengthAdjust="spacingAndGlyphs">P</text></g><circle cx="7.7" cy="11.2" r="2.9" fill="none" stroke="#000" stroke-width="1"/><path d="M9.8 13.4 L12.6 16" stroke="#000" stroke-width="1.3"/><path d="M7.7 9.6 V12.8 M6.1 11.2 H9.3" stroke="#000" stroke-width="1"/></svg>
<div class="t w10t" style="left:1405.3px;top:310.5px;font-size:12.8px;letter-spacing:-0.028px;">Noise Level</div>
<svg style="position:absolute;left:1499px;top:304px" width="130" height="24" viewBox="0 0 130 24"><g stroke="#777" stroke-width="1" fill="none"><path d="M1 11.5 H11"/><rect x="50.5" y="6.5" width="9" height="9"/><path d="M100 6 l10 10 M110 6 l-10 10"/></g></svg>
<div class="mono" style="left:1388.16px;top:339.97px;font-size:36.55px;-webkit-text-stroke:0.62px #00ffff;transform:scaleX(0.9997)"> -78.39 dBV</div>
<div class="w10" style="left:1377px;top:386px;width:251px;height:86px;"></div>
<div class="" style="left:1377px;top:418px;width:251px;height:54px;background:#000"></div>
<svg style="position:absolute;left:1385px;top:394px" width="16.0" height="16.0" viewBox="0 0 16 16"><g font-family="Liberation Sans" font-weight="bold" font-size="8.2"><text x="0" y="6" fill="#0000ff" textLength="4.2" lengthAdjust="spacingAndGlyphs">D</text><text x="4.8" y="6" fill="#ff0000" textLength="4.2" lengthAdjust="spacingAndGlyphs">D</text><text x="9.6" y="6" fill="#00e000" textLength="4.2" lengthAdjust="spacingAndGlyphs">P</text></g><circle cx="7.7" cy="11.2" r="2.9" fill="none" stroke="#000" stroke-width="1"/><path d="M9.8 13.4 L12.6 16" stroke="#000" stroke-width="1.3"/><path d="M7.7 9.6 V12.8 M6.1 11.2 H9.3" stroke="#000" stroke-width="1"/></svg>
<div class="t w10t" style="left:1406.3px;top:396.5px;font-size:12.8px;letter-spacing:-1.530px;">PWR_A</div>
<svg style="position:absolute;left:1498px;top:390px" width="130" height="24" viewBox="0 0 130 24"><g stroke="#777" stroke-width="1" fill="none"><path d="M1 11.5 H11"/><rect x="50.5" y="6.5" width="9" height="9"/><path d="M100 6 l10 10 M110 6 l-10 10"/></g></svg>
<div class="mono" style="left:1389.30px;top:424.81px;font-size:43.27px;-webkit-text-stroke:0.74px #00ffff;transform:scaleX(0.7686)">670.83799 nW</div>
<div class="w10" style="left:1671px;top:123px;width:242px;height:93px;"></div>
<div class="" style="left:1671px;top:155px;width:242px;height:61px;background:#000"></div>
<svg style="position:absolute;left:1679px;top:131px" width="16.0" height="16.0" viewBox="0 0 16 16"><g font-family="Liberation Sans" font-weight="bold" font-size="8.2"><text x="0" y="6" fill="#0000ff" textLength="4.2" lengthAdjust="spacingAndGlyphs">D</text><text x="4.8" y="6" fill="#ff0000" textLength="4.2" lengthAdjust="spacingAndGlyphs">D</text><text x="9.6" y="6" fill="#00e000" textLength="4.2" lengthAdjust="spacingAndGlyphs">P</text></g><circle cx="7.7" cy="11.2" r="2.9" fill="none" stroke="#000" stroke-width="1"/><path d="M9.8 13.4 L12.6 16" stroke="#000" stroke-width="1.3"/><path d="M7.7 9.6 V12.8 M6.1 11.2 H9.3" stroke="#000" stroke-width="1"/></svg>
<div class="t w10t" style="left:1700.3px;top:133.5px;font-size:12.8px;letter-spacing:-1.153px;">THD</div>
<svg style="position:absolute;left:1783px;top:127px" width="130" height="24" viewBox="0 0 130 24"><g stroke="#777" stroke-width="1" fill="none"><path d="M1 11.5 H11"/><rect x="50.5" y="6.5" width="9" height="9"/><path d="M100 6 l10 10 M110 6 l-10 10"/></g></svg>
<div class="mono" style="left:1679.95px;top:162.31px;font-size:50.44px;-webkit-text-stroke:0.86px #00ffff;transform:scaleX(0.8510)">0.05576 %</div>
<div class="w10" style="left:1673px;top:221px;width:241px;height:91px;"></div>
<div class="" style="left:1673px;top:253px;width:241px;height:59px;background:#000"></div>
<svg style="position:absolute;left:1681px;top:229px" width="16.0" height="16.0" viewBox="0 0 16 16"><g font-family="Liberation Sans" font-weight="bold" font-size="8.2"><text x="0" y="6" fill="#0000ff" textLength="4.2" lengthAdjust="spacingAndGlyphs">D</text><text x="4.8" y="6" fill="#ff0000" textLength="4.2" lengthAdjust="spacingAndGlyphs">D</text><text x="9.6" y="6" fill="#00e000" textLength="4.2" lengthAdjust="spacingAndGlyphs">P</text></g><circle cx="7.7" cy="11.2" r="2.9" fill="none" stroke="#000" stroke-width="1"/><path d="M9.8 13.4 L12.6 16" stroke="#000" stroke-width="1.3"/><path d="M7.7 9.6 V12.8 M6.1 11.2 H9.3" stroke="#000" stroke-width="1"/></svg>
<div class="t w10t" style="left:1702.3px;top:231.5px;font-size:12.8px;letter-spacing:-1.153px;">THD</div>
<svg style="position:absolute;left:1784px;top:225px" width="130" height="24" viewBox="0 0 130 24"><g stroke="#777" stroke-width="1" fill="none"><path d="M1 11.5 H11"/><rect x="50.5" y="6.5" width="9" height="9"/><path d="M100 6 l10 10 M110 6 l-10 10"/></g></svg>
<div class="mono" style="left:1681.45px;top:258.93px;font-size:48.98px;-webkit-text-stroke:0.83px #00ffff;transform:scaleX(0.8799)">-65.07 dB</div>
<div class="w10" style="left:1675px;top:318px;width:240px;height:90px;"></div>
<div class="" style="left:1675px;top:350px;width:240px;height:58px;background:#000"></div>
<svg style="position:absolute;left:1683px;top:326px" width="16.0" height="16.0" viewBox="0 0 16 16"><g font-family="Liberation Sans" font-weight="bold" font-size="8.2"><text x="0" y="6" fill="#0000ff" textLength="4.2" lengthAdjust="spacingAndGlyphs">D</text><text x="4.8" y="6" fill="#ff0000" textLength="4.2" lengthAdjust="spacingAndGlyphs">D</text><text x="9.6" y="6" fill="#00e000" textLength="4.2" lengthAdjust="spacingAndGlyphs">P</text></g><circle cx="7.7" cy="11.2" r="2.9" fill="none" stroke="#000" stroke-width="1"/><path d="M9.8 13.4 L12.6 16" stroke="#000" stroke-width="1.3"/><path d="M7.7 9.6 V12.8 M6.1 11.2 H9.3" stroke="#000" stroke-width="1"/></svg>
<div class="t w10t" style="left:1704.3px;top:328.5px;font-size:12.8px;letter-spacing:0.119px;">THD+N</div>
<svg style="position:absolute;left:1785px;top:322px" width="130" height="24" viewBox="0 0 130 24"><g stroke="#777" stroke-width="1" fill="none"><path d="M1 11.5 H11"/><rect x="50.5" y="6.5" width="9" height="9"/><path d="M100 6 l10 10 M110 6 l-10 10"/></g></svg>
<div class="mono" style="left:1675.97px;top:356.43px;font-size:48.98px;-webkit-text-stroke:0.83px #00ffff;transform:scaleX(0.8101)">14.69998 %</div>
<div class="w10" style="left:1676px;top:414px;width:240px;height:88px;"></div>
<div class="" style="left:1676px;top:446px;width:240px;height:56px;background:#000"></div>
<svg style="position:absolute;left:1684px;top:422px" width="16.0" height="16.0" viewBox="0 0 16 16"><g font-family="Liberation Sans" font-weight="bold" font-size="8.2"><text x="0" y="6" fill="#0000ff" textLength="4.2" lengthAdjust="spacingAndGlyphs">D</text><text x="4.8" y="6" fill="#ff0000" textLength="4.2" lengthAdjust="spacingAndGlyphs">D</text><text x="9.6" y="6" fill="#00e000" textLength="4.2" lengthAdjust="spacingAndGlyphs">P</text></g><circle cx="7.7" cy="11.2" r="2.9" fill="none" stroke="#000" stroke-width="1"/><path d="M9.8 13.4 L12.6 16" stroke="#000" stroke-width="1.3"/><path d="M7.7 9.6 V12.8 M6.1 11.2 H9.3" stroke="#000" stroke-width="1"/></svg>
<div class="t w10t" style="left:1705.3px;top:424.5px;font-size:12.8px;letter-spacing:0.119px;">THD+N</div>
<svg style="position:absolute;left:1786px;top:418px" width="130" height="24" viewBox="0 0 130 24"><g stroke="#777" stroke-width="1" fill="none"><path d="M1 11.5 H11"/><rect x="50.5" y="6.5" width="9" height="9"/><path d="M100 6 l10 10 M110 6 l-10 10"/></g></svg>
<div class="mono" style="left:1683.45px;top:452.19px;font-size:45.91px;-webkit-text-stroke:0.78px #00ffff;transform:scaleX(0.9379)">-16.65 dB</div>
<div class="w10" style="left:1677px;top:511px;width:237px;height:89px;"></div>
<div class="" style="left:1677px;top:543px;width:237px;height:57px;background:#000"></div>
<svg style="position:absolute;left:1685px;top:519px" width="16.0" height="16.0" viewBox="0 0 16 16"><g font-family="Liberation Sans" font-weight="bold" font-size="8.2"><text x="0" y="6" fill="#0000ff" textLength="4.2" lengthAdjust="spacingAndGlyphs">D</text><text x="4.8" y="6" fill="#ff0000" textLength="4.2" lengthAdjust="spacingAndGlyphs">D</text><text x="9.6" y="6" fill="#00e000" textLength="4.2" lengthAdjust="spacingAndGlyphs">P</text></g><circle cx="7.7" cy="11.2" r="2.9" fill="none" stroke="#000" stroke-width="1"/><path d="M9.8 13.4 L12.6 16" stroke="#000" stroke-width="1.3"/><path d="M7.7 9.6 V12.8 M6.1 11.2 H9.3" stroke="#000" stroke-width="1"/></svg>
<div class="t w10t" style="left:1706.3px;top:521.5px;font-size:12.8px;letter-spacing:-1.113px;">SNR</div>
<svg style="position:absolute;left:1784px;top:515px" width="130" height="24" viewBox="0 0 130 24"><g stroke="#777" stroke-width="1" fill="none"><path d="M1 11.5 H11"/><rect x="50.5" y="6.5" width="9" height="9"/><path d="M100 6 l10 10 M110 6 l-10 10"/></g></svg>
<div class="mono" style="left:1683.07px;top:548.82px;font-size:47.95px;-webkit-text-stroke:0.82px #00ffff;transform:scaleX(1.0048)">16.56 dB</div>
<div class="w10" style="left:1678px;top:609px;width:235px;height:88px;"></div>
<div class="" style="left:1678px;top:641px;width:235px;height:56px;background:#000"></div>
<svg style="position:absolute;left:1686px;top:617px" width="16.0" height="16.0" viewBox="0 0 16 16"><g font-family="Liberation Sans" font-weight="bold" font-size="8.2"><text x="0" y="6" fill="#0000ff" textLength="4.2" lengthAdjust="spacingAndGlyphs">D</text><text x="4.8" y="6" fill="#ff0000" textLength="4.2" lengthAdjust="spacingAndGlyphs">D</text><text x="9.6" y="6" fill="#00e000" textLength="4.2" lengthAdjust="spacingAndGlyphs">P</text></g><circle cx="7.7" cy="11.2" r="2.9" fill="none" stroke="#000" stroke-width="1"/><path d="M9.8 13.4 L12.6 16" stroke="#000" stroke-width="1.3"/><path d="M7.7 9.6 V12.8 M6.1 11.2 H9.3" stroke="#000" stroke-width="1"/></svg>
<div class="t w10t" style="left:1707.3px;top:619.5px;font-size:12.8px;letter-spacing:-0.755px;">SINAD</div>
<svg style="position:absolute;left:1783px;top:613px" width="130" height="24" viewBox="0 0 130 24"><g stroke="#777" stroke-width="1" fill="none"><path d="M1 11.5 H11"/><rect x="50.5" y="6.5" width="9" height="9"/><path d="M100 6 l10 10 M110 6 l-10 10"/></g></svg>
<div class="mono" style="left:1682.57px;top:647.19px;font-size:45.91px;-webkit-text-stroke:0.78px #00ffff;transform:scaleX(1.0468)">16.65 dB</div>
<div class="w10" style="left:1678px;top:705px;width:234px;height:93px;"></div>
<div class="" style="left:1678px;top:737px;width:234px;height:61px;background:#000"></div>
<svg style="position:absolute;left:1686px;top:713px" width="16.0" height="16.0" viewBox="0 0 16 16"><g font-family="Liberation Sans" font-weight="bold" font-size="8.2"><text x="0" y="6" fill="#0000ff" textLength="4.2" lengthAdjust="spacingAndGlyphs">D</text><text x="4.8" y="6" fill="#ff0000" textLength="4.2" lengthAdjust="spacingAndGlyphs">D</text><text x="9.6" y="6" fill="#00e000" textLength="4.2" lengthAdjust="spacingAndGlyphs">P</text></g><circle cx="7.7" cy="11.2" r="2.9" fill="none" stroke="#000" stroke-width="1"/><path d="M9.8 13.4 L12.6 16" stroke="#000" stroke-width="1.3"/><path d="M7.7 9.6 V12.8 M6.1 11.2 H9.3" stroke="#000" stroke-width="1"/></svg>
<div class="t w10t" style="left:1707.3px;top:715.5px;font-size:12.8px;letter-spacing:-1.092px;">ENOB</div>
<svg style="position:absolute;left:1782px;top:709px" width="130" height="24" viewBox="0 0 130 24"><g stroke="#777" stroke-width="1" fill="none"><path d="M1 11.5 H11"/><rect x="50.5" y="6.5" width="9" height="9"/><path d="M100 6 l10 10 M110 6 l-10 10"/></g></svg>
<div class="mono" style="left:1680.65px;top:745.00px;font-size:48.25px;-webkit-text-stroke:0.82px #00ffff;transform:scaleX(1.0066)">2.47 Bit</div>
<div class="w10" style="left:1394px;top:495px;width:242px;height:559px;background:#f0f0f0"></div>
<div class="" style="left:1394px;top:495px;width:242px;height:28px;background:#fff"></div>
<svg style="position:absolute;left:1397px;top:500px" width="16" height="16" viewBox="0 0 16 16"><rect width="16" height="16" fill="#ffff00"/><path d="M0 4 C1 0.5 2 0.5 3 2 H5 C6 5 7 5 8 2 H10 C11 0.5 12 0.5 13 2 H15 L16 4" fill="none" stroke="#ff0000" stroke-width="1.1"/><path d="M0 8.5 H2 V6.5 H5 V9.5 H8 V6.5 H11 V9.5 H14 V6.5 H16" fill="none" stroke="#00c000" stroke-width="1.1"/><path d="M0 14 L2 10.5 L4.5 14.5 L7 10.5 L9.5 14.5 L12 10.5 L14.5 14.5 L16 11" fill="none" stroke="#0000ff" stroke-width="1.1"/></svg>
<div class="t w10t" style="left:1418px;top:502.5px;font-size:12.8px;letter-spacing:-0.289px;">Signal Ge...</div>
<svg style="position:absolute;left:1500px;top:496px" width="130" height="24" viewBox="0 0 130 24"><g stroke="#777" stroke-width="1" fill="none"><path d="M7 12.5 H17"/><rect x="56.5" y="7.5" width="9" height="9" stroke="#e0e0e0"/><path d="M106 7 l10 10 M116 7 l-10 10"/></g></svg>
<div class="sunk" style="left:1399px;top:530px;width:9px;height:9px;background:#fff"><svg width="9" height="9" viewBox="0 0 9 9" style="position:absolute;left:0;top:0"><path d="M1.2 4 L3.5 6.3 L7.8 1.8" fill="none" stroke="#000" stroke-width="2"/></svg></div>
<div class="t ms mss" style="left:1418px;top:531px;">Show Editor</div>
<div class="sunk" style="left:1480px;top:527px;width:123px;height:16px;background:#fff;color:#000;"><div class="t ms mss" style="left:1px;top:3px;">No Loopback</div><div class="cbtn" style="left:107px;top:0px;width:16px;height:16px"></div><div class="arr" style="left:112.0px;top:6.5px;border-left:3.5px solid transparent;border-right:3.5px solid transparent;border-top:4px solid #000"></div></div>
<div class="rbtn" style="left:1609px;top:525px;width:22px;height:21px;"><svg style="position:absolute;left:6px;top:5px" width="12" height="11" viewBox="0 0 12 11"><path d="M1 0.5 L11 5.5 L1 10.5 Z" fill="#ff0000"/></svg></div>
<div class="t ms mss dis" style="left:1397px;top:557px;">Start OSC after (s)</div>
<div class="sunk" style="left:1489px;top:553px;width:64px;height:15px;background:#f0f0f0;color:#a0a0a0"><div class="t ms mss" style="left:0.5px;top:2px;">0</div></div>
<div class="sunk" style="left:1559px;top:556px;width:9px;height:9px;background:#f0f0f0"></div>
<div class="t ms mss dis" style="left:1578px;top:557px;">Echo Only</div>
<div class="grp" style="left:1396px;top:586px;width:208px;height:35px;"></div>
<div class="" style="left:1402px;top:581px;width:104px;height:12px;background:#f0f0f0"></div>
<div class="t ms mss" style="left:1405px;top:581px;">Sampling Parameters</div>
<div class="sunk" style="left:1402px;top:595px;width:96px;height:16px;background:#fff;color:#000;"><div class="t ms mss" style="left:1px;top:3px;">48kHz</div><div class="cbtn" style="left:80px;top:0px;width:16px;height:16px"></div><div class="arr" style="left:85.0px;top:6.5px;border-left:3.5px solid transparent;border-right:3.5px solid transparent;border-top:4px solid #000"></div></div>
<div class="sunk" style="left:1504px;top:595px;width:39px;height:16px;background:#fff;color:#000;"><div class="t ms mss" style="left:1px;top:3px;">A</div><div class="cbtn" style="left:23px;top:0px;width:16px;height:16px"></div><div class="arr" style="left:28.0px;top:6.5px;border-left:3.5px solid transparent;border-right:3.5px solid transparent;border-top:4px solid #000"></div></div>
<div class="sunk" style="left:1550px;top:595px;width:48px;height:16px;background:#fff;color:#000;"><div class="t ms mss" style="left:1px;top:3px;">24Bit</div><div class="cbtn" style="left:32px;top:0px;width:16px;height:16px"></div><div class="arr" style="left:37.0px;top:6.5px;border-left:3.5px solid transparent;border-right:3.5px solid transparent;border-top:4px solid #000"></div></div>
<div class="rbtn" style="left:1609px;top:579px;width:22px;height:21px;"><svg style="position:absolute;left:4px;top:3px" width="15" height="15" viewBox="0 0 16 16"><path d="M1.5 1.5 H14.5 V14.5 H2.5 L1.5 13.5 Z" fill="#808000" stroke="#000" stroke-width="1"/><rect x="4" y="1.5" width="8" height="6" fill="#f0f0f0" stroke="#000" stroke-width="1"/><rect x="4" y="10" width="8" height="4.5" fill="#000"/><rect x="9.5" y="11" width="1.8" height="2.6" fill="#f0f0f0"/></svg></div>
<div class="rbtn" style="left:1609px;top:603px;width:22px;height:21px;"><svg style="position:absolute;left:3px;top:3px" width="16" height="16" viewBox="0 0 16 16"><path d="M1 5.5 H15 M1 8.5 H15 M1 11.5 H15 M1 14.5 H15" stroke="#808080" stroke-width="0.8"/><path d="M5 13 V4 L12.5 2 V11" fill="none" stroke="#ff0000" stroke-width="1.2"/><circle cx="3.8" cy="13.3" r="1.6" fill="#ff0000"/><circle cx="11.3" cy="11.3" r="1.6" fill="#ff0000"/></svg></div>
<div class="sunk" style="left:1405px;top:633px;width:81px;height:16px;background:#fff;color:#000;"><div class="t ms mss" style="left:1px;top:3px;">Sine</div><div class="cbtn" style="left:65px;top:0px;width:16px;height:16px"></div><div class="arr" style="left:70.0px;top:6.5px;border-left:3.5px solid transparent;border-right:3.5px solid transparent;border-top:4px solid #000"></div></div>
<div class="rbtn" style="left:1502px;top:633px;width:21px;height:19px;"><div class="t ms mss" style="left:0px;top:3px;width:21px;text-align:center;transform-origin:50% 0;">...</div></div>
<div class="sunk" style="left:1538px;top:633px;width:81px;height:16px;background:#f0f0f0;color:#a0a0a0;"><div class="t ms mss" style="left:1px;top:3px;">None</div><div class="cbtn" style="left:65px;top:0px;width:16px;height:16px"></div><div class="arr" style="left:70.0px;top:6.5px;border-left:3.5px solid transparent;border-right:3.5px solid transparent;border-top:4px solid #a0a0a0"></div></div>
<div class="sunk" style="left:1397px;top:663px;width:58px;height:16px;background:#fff;color:#000"><div class="t ms mss" style="left:0.5px;top:3px;">0</div></div>
<div class="rbtn" style="left:1460px;top:662px;width:17px;height:9px"><div class="arr" style="left:6.0px;top:3.0px;border-left:2.5px solid transparent;border-right:2.5px solid transparent;border-bottom:3px solid #000"></div></div><div class="rbtn" style="left:1460px;top:673px;width:17px;height:9px"><div class="arr" style="left:6.0px;top:3.0px;border-left:2.5px solid transparent;border-right:2.5px solid transparent;border-top:3px solid #000"></div></div>
<div class="t ms mss" style="left:1483px;top:668px;">DC Offset (V)</div>
<div class="sunk" style="left:1553px;top:663px;width:58px;height:16px;background:#f0f0f0;color:#a0a0a0"><div class="t ms mss" style="left:0.5px;top:3px;">0</div></div>
<div class="rbtn" style="left:1616px;top:662px;width:17px;height:9px"><div class="arr" style="left:6.0px;top:3.0px;border-left:2.5px solid transparent;border-right:2.5px solid transparent;border-bottom:3px solid #a0a0a0"></div></div><div class="rbtn" style="left:1616px;top:673px;width:17px;height:9px"><div class="arr" style="left:6.0px;top:3.0px;border-left:2.5px solid transparent;border-right:2.5px solid transparent;border-top:3px solid #a0a0a0"></div></div>
<div class="t ms mss" style="left:1414px;top:690px;width:200px;text-align:center;transform-origin:50% 0;">Output Frequency (Hz)</div>
<div class="sunk" style="left:1429px;top:708px;width:84px;height:15px;background:#fff;color:#000;"><div class="t ms mss" style="left:1px;top:2px;">1000</div><div class="cbtn" style="left:68px;top:0px;width:16px;height:15px"></div><div class="arr" style="left:73.0px;top:6.0px;border-left:3.5px solid transparent;border-right:3.5px solid transparent;border-top:4px solid #000"></div></div>
<div class="sunk" style="left:1518px;top:708px;width:83px;height:15px;background:#f0f0f0;color:#a0a0a0;"><div class="t ms mss" style="left:1px;top:2px;">1000</div><div class="cbtn" style="left:67px;top:0px;width:16px;height:15px"></div><div class="arr" style="left:72.0px;top:6.0px;border-left:3.5px solid transparent;border-right:3.5px solid transparent;border-top:4px solid #a0a0a0"></div></div>
<div class="t ms mss" style="left:1412px;top:739px;width:200px;text-align:center;transform-origin:50% 0;">Output Amplitude(Vp)</div>
<div class="sunk" style="left:1429px;top:760px;width:84px;height:15px;background:#fff;color:#000;"><div class="t ms mss" style="left:1px;top:2px;">1</div><div class="cbtn" style="left:68px;top:0px;width:16px;height:15px"></div><div class="arr" style="left:73.0px;top:6.0px;border-left:3.5px solid transparent;border-right:3.5px solid transparent;border-top:4px solid #000"></div></div>
<div class="sunk" style="left:1518px;top:760px;width:83px;height:15px;background:#f0f0f0;color:#a0a0a0;"><div class="t ms mss" style="left:1px;top:2px;">1</div><div class="cbtn" style="left:67px;top:0px;width:16px;height:15px"></div><div class="arr" style="left:72.0px;top:6.0px;border-left:3.5px solid transparent;border-right:3.5px solid transparent;border-top:4px solid #a0a0a0"></div></div>
<div class="t ms mss dis" style="left:1414px;top:791px;width:200px;text-align:center;transform-origin:50% 0;">Output Phase Difference (Degree)</div>
<div class="sunk" style="left:1477px;top:811px;width:69px;height:15px;background:#f0f0f0;color:#a0a0a0;"><div class="t ms mss" style="left:1px;top:2px;">0</div><div class="cbtn" style="left:53px;top:0px;width:16px;height:15px"></div><div class="arr" style="left:58.0px;top:6.0px;border-left:3.5px solid transparent;border-right:3.5px solid transparent;border-top:4px solid #a0a0a0"></div></div>
<div class="" style="left:1402px;top:696px;width:1px;height:133px;background:#a0a0a0"></div><div class="" style="left:1403px;top:696px;width:1px;height:133px;background:#696969"></div><div class="" style="left:1404px;top:696px;width:1px;height:133px;background:#fff"></div><div class="" style="left:1398px;top:821px;width:10px;height:3px;background:#f0f0f0;border:1px solid;border-color:#fff #696969 #696969 #fff"></div>
<div class="" style="left:1417px;top:696px;width:1px;height:133px;background:#a0a0a0"></div><div class="" style="left:1418px;top:696px;width:1px;height:133px;background:#696969"></div><div class="" style="left:1419px;top:696px;width:1px;height:133px;background:#fff"></div><div class="" style="left:1413px;top:807px;width:10px;height:3px;background:#f0f0f0;border:1px solid;border-color:#fff #696969 #696969 #fff"></div>
<div class="" style="left:1611px;top:696px;width:1px;height:133px;background:#a0a0a0"></div><div class="" style="left:1612px;top:696px;width:1px;height:133px;background:#696969"></div><div class="" style="left:1613px;top:696px;width:1px;height:133px;background:#fff"></div><div class="" style="left:1607px;top:807px;width:10px;height:3px;background:#f0f0f0;border:1px solid;border-color:#fff #696969 #696969 #fff"></div>
<div class="" style="left:1624px;top:696px;width:1px;height:133px;background:#a0a0a0"></div><div class="" style="left:1625px;top:696px;width:1px;height:133px;background:#696969"></div><div class="" style="left:1626px;top:696px;width:1px;height:133px;background:#fff"></div><div class="" style="left:1620px;top:821px;width:10px;height:3px;background:#f0f0f0;border:1px solid;border-color:#fff #696969 #696969 #fff"></div>
<div class="t ms mss" style="left:1397px;top:835px;">-17.0dBFS</div>
<div class="" style="left:1453px;top:840px;width:120px;height:1px;background:#a0a0a0"></div>
<div class="" style="left:1453px;top:841px;width:120px;height:1px;background:#696969"></div>
<div class="" style="left:1453px;top:842px;width:120px;height:1px;background:#fff"></div>
<div class="" style="left:1511px;top:836px;width:3px;height:9px;background:#f0f0f0;border:1px solid;border-color:#fff #696969 #696969 #fff"></div>
<div class="t ms mss dis" style="left:1587px;top:835px;">-17.0dBFS</div>
<div class="grp" style="left:1396px;top:853px;width:236px;height:45px;"></div>
<div class="sunk" style="left:1403px;top:859px;width:9px;height:9px;background:#fff"></div>
<div class="t ms mss" style="left:1422px;top:861px;">Mask</div>
<div class="rbtn" style="left:1466px;top:858px;width:13px;height:13px;"><div class="t ms mss dis" style="left:0px;top:0px;width:13px;text-align:center;transform-origin:50% 0;">...</div></div>
<div class="t ms mss dis" style="left:1502px;top:861px;">On (s)</div>
<div class="t ms mss dis" style="left:1578px;top:861px;">Off (s)</div>
<div class="sunk" style="left:1403px;top:879px;width:9px;height:9px;background:#f0f0f0"><svg width="9" height="9" viewBox="0 0 9 9" style="position:absolute;left:0;top:0"><path d="M1.2 4 L3.5 6.3 L7.8 1.8" fill="none" stroke="#a0a0a0" stroke-width="2"/></svg></div>
<div class="t ms mss dis" style="left:1422px;top:881px;">Phase Lock</div>
<div class="sunk" style="left:1489px;top:877px;width:62px;height:15px;background:#f0f0f0;color:#a0a0a0"><div class="t ms mss" style="left:0.5px;top:2px;">1</div></div>
<div class="sunk" style="left:1562px;top:877px;width:62px;height:15px;background:#f0f0f0;color:#a0a0a0"><div class="t ms mss" style="left:0.5px;top:2px;">0</div></div>
<div class="grp" style="left:1396px;top:905px;width:236px;height:44px;"></div>
<div class="sunk" style="left:1403px;top:920px;width:9px;height:9px;background:#fff"></div>
<div class="t ms mss" style="left:1422px;top:922px;">Fade</div>
<div class="t ms mss dis" style="left:1502px;top:911px;">In (s)</div>
<div class="t ms mss dis" style="left:1578px;top:911px;">Out (s)</div>
<div class="sunk" style="left:1489px;top:927px;width:62px;height:16px;background:#f0f0f0;color:#a0a0a0"><div class="t ms mss" style="left:0.5px;top:3px;">0.01</div></div>
<div class="sunk" style="left:1562px;top:927px;width:62px;height:16px;background:#f0f0f0;color:#a0a0a0"><div class="t ms mss" style="left:0.5px;top:3px;">0.01</div></div>
<div class="grp" style="left:1396px;top:955px;width:236px;height:46px;"></div>
<div class="t ms mss" style="left:1399px;top:960px;">Modulation</div>
<div class="t ms mss dis" style="left:1472px;top:960px;">Carrier (Hz)</div>
<div class="t ms mss dis" style="left:1547px;top:960px;">Mod. Index (%)</div>
<div class="sunk" style="left:1400px;top:977px;width:53px;height:16px;background:#fff;color:#000;"><div class="t ms mss" style="left:1px;top:3px;">NIL</div><div class="cbtn" style="left:37px;top:0px;width:16px;height:16px"></div><div class="arr" style="left:42.0px;top:6.5px;border-left:3.5px solid transparent;border-right:3.5px solid transparent;border-top:4px solid #000"></div></div>
<div class="sunk" style="left:1472px;top:977px;width:62px;height:16px;background:#f0f0f0;color:#a0a0a0"><div class="t ms mss" style="left:0.5px;top:3px;">0</div></div>
<div class="sunk" style="left:1553px;top:977px;width:62px;height:16px;background:#f0f0f0;color:#a0a0a0"><div class="t ms mss" style="left:0.5px;top:3px;">0</div></div>
<div class="t ms mss" style="left:1396px;top:1012px;">Duration (s)</div>
<div class="sunk" style="left:1460px;top:1008px;width:62px;height:16px;background:#f0f0f0;color:#a0a0a0"><div class="t ms mss" style="left:0.5px;top:3px;">1</div></div>
<div class="sunk" style="left:1532px;top:1011px;width:9px;height:9px;background:#fff"><svg width="9" height="9" viewBox="0 0 9 9" style="position:absolute;left:0;top:0"><path d="M1.2 4 L3.5 6.3 L7.8 1.8" fill="none" stroke="#000" stroke-width="2"/></svg></div>
<div class="t ms mss" style="left:1551px;top:1012px;">Loop</div>
<div class="sunk" style="left:1588px;top:1011px;width:9px;height:9px;background:#f0f0f0"></div>
<div class="t ms mss dis" style="left:1607px;top:1012px;">DDS</div>
<div class="sunk" style="left:1396px;top:1035px;width:9px;height:9px;background:#fff"></div>
<div class="t ms mss" style="left:1415px;top:1037px;">Sweep</div>
<svg style="position:absolute;left:1472px;top:1035px" width="96" height="14" viewBox="0 0 96 14"><circle cx="6.5" cy="6.5" r="5.5" fill="#f0f0f0" stroke="#a0a0a0"/><path d="M2.6 10.4 A5.5 5.5 0 0 1 10.4 2.6" fill="none" stroke="#696969"/><circle cx="6.5" cy="6.5" r="2.2" fill="#a0a0a0"/><circle cx="87.5" cy="6.5" r="5.5" fill="#f0f0f0" stroke="#fff"/><path d="M83.6 10.4 A5.5 5.5 0 0 1 91.4 2.6" fill="none" stroke="#696969"/></svg>
<div class="t ms mss dis" style="left:1491px;top:1037px;">Frequency</div>
<div class="t ms mss dis" style="left:1572px;top:1037px;">Amplitude</div>
<div class="" style="left:0px;top:1055px;width:1920px;height:25px;background:#f0f0f0"></div>
<div class="" style="left:0px;top:1055px;width:1920px;height:1px;background:#a0a0a0"></div>
<div class="" style="left:0px;top:1056px;width:1920px;height:1px;background:#fff"></div>
<div class="" style="left:3px;top:1059px;width:1px;height:21px;background:#fff"></div>
<div class="" style="left:4px;top:1059px;width:1px;height:21px;background:#a0a0a0"></div>
<div class="t ui" style="left:19px;top:1063px;">F</div>
<div class="sunk" style="left:30px;top:1058px;width:147px;height:19px;background:#fff;color:#000;"><div class="t ui" style="left:1px;top:4px;">Auto</div><div class="cbtn" style="left:130px;top:0px;width:17px;height:19px"></div><div class="arr" style="left:134.5px;top:7.5px;border-left:5.0px solid transparent;border-right:5.0px solid transparent;border-top:5px solid #000"></div></div>
<div class="sunk" style="left:184px;top:1058px;width:114px;height:19px;background:#fff;color:#000;"><div class="t ui" style="left:1px;top:4px;">×1</div><div class="cbtn" style="left:97px;top:0px;width:17px;height:19px"></div><div class="arr" style="left:101.5px;top:7.5px;border-left:5.0px solid transparent;border-right:5.0px solid transparent;border-top:5px solid #000"></div></div>
<div class="t ui" style="left:309px;top:1063px;">A</div>
<div class="sunk" style="left:325px;top:1058px;width:148px;height:19px;background:#000;color:#00ffff;"><div class="t ui" style="left:1px;top:4px;">&lt;200dB&gt;</div><div class="cbtn" style="left:131px;top:0px;width:17px;height:19px"></div><div class="arr" style="left:135.5px;top:7.5px;border-left:5.0px solid transparent;border-right:5.0px solid transparent;border-top:5px solid #000"></div></div>
<div class="sunk" style="left:479px;top:1058px;width:105px;height:19px;background:#000;color:#00ffff;"><div class="t ui" style="left:1px;top:4px;">Off</div><div class="cbtn" style="left:88px;top:0px;width:17px;height:19px"></div><div class="arr" style="left:92.5px;top:7.5px;border-left:5.0px solid transparent;border-right:5.0px solid transparent;border-top:5px solid #000"></div></div>
<div class="t ui" style="left:597px;top:1063px;">M</div>
<div class="sunk" style="left:615px;top:1058px;width:303px;height:19px;background:#fff;color:#000;"><div class="t ui" style="left:1px;top:4px;">Amplitude Spectrum</div><div class="cbtn" style="left:286px;top:0px;width:17px;height:19px"></div><div class="arr" style="left:290.5px;top:7.5px;border-left:5.0px solid transparent;border-right:5.0px solid transparent;border-top:5px solid #000"></div></div>
<div class="t ui" style="left:929px;top:1063px;">B</div>
<div class="sunk" style="left:944px;top:1058px;width:149px;height:19px;background:#000;color:#606060;"><div class="t ui" style="left:1px;top:4px;">Off</div><div class="cbtn" style="left:132px;top:0px;width:17px;height:19px"></div><div class="arr" style="left:136.5px;top:7.5px;border-left:5.0px solid transparent;border-right:5.0px solid transparent;border-top:5px solid #a0a0a0"></div></div>
<div class="sunk" style="left:1100px;top:1058px;width:105px;height:19px;background:#000;color:#606060;"><div class="t ui" style="left:1px;top:4px;">Off</div><div class="cbtn" style="left:88px;top:0px;width:17px;height:19px"></div><div class="arr" style="left:92.5px;top:7.5px;border-left:5.0px solid transparent;border-right:5.0px solid transparent;border-top:5px solid #a0a0a0"></div></div>
<div class="t ui" style="left:1223px;top:1063px;">FFT</div>
<div class="sunk" style="left:1256px;top:1058px;width:153px;height:19px;background:#fff;color:#000;"><div class="t ui" style="left:1px;top:4px;">131072</div><div class="cbtn" style="left:136px;top:0px;width:17px;height:19px"></div><div class="arr" style="left:140.5px;top:7.5px;border-left:5.0px solid transparent;border-right:5.0px solid transparent;border-top:5px solid #000"></div></div>
<div class="t ui" style="left:1436px;top:1063px;">WND</div>
<div class="sunk" style="left:1489px;top:1058px;width:265px;height:19px;background:#fff;color:#000;"><div class="t ui" style="left:1px;top:4px;">Kaiser 6</div><div class="cbtn" style="left:248px;top:0px;width:17px;height:19px"></div><div class="arr" style="left:252.5px;top:7.5px;border-left:5.0px solid transparent;border-right:5.0px solid transparent;border-top:5px solid #000"></div></div>
<div class="sunk" style="left:1761px;top:1058px;width:151px;height:19px;background:#f0f0f0;color:#a0a0a0;"><div class="t ui" style="left:1px;top:4px;">0%</div><div class="cbtn" style="left:134px;top:0px;width:17px;height:19px"></div><div class="arr" style="left:138.5px;top:7.5px;border-left:5.0px solid transparent;border-right:5.0px solid transparent;border-top:5px solid #a0a0a0"></div></div>
</body></html>
